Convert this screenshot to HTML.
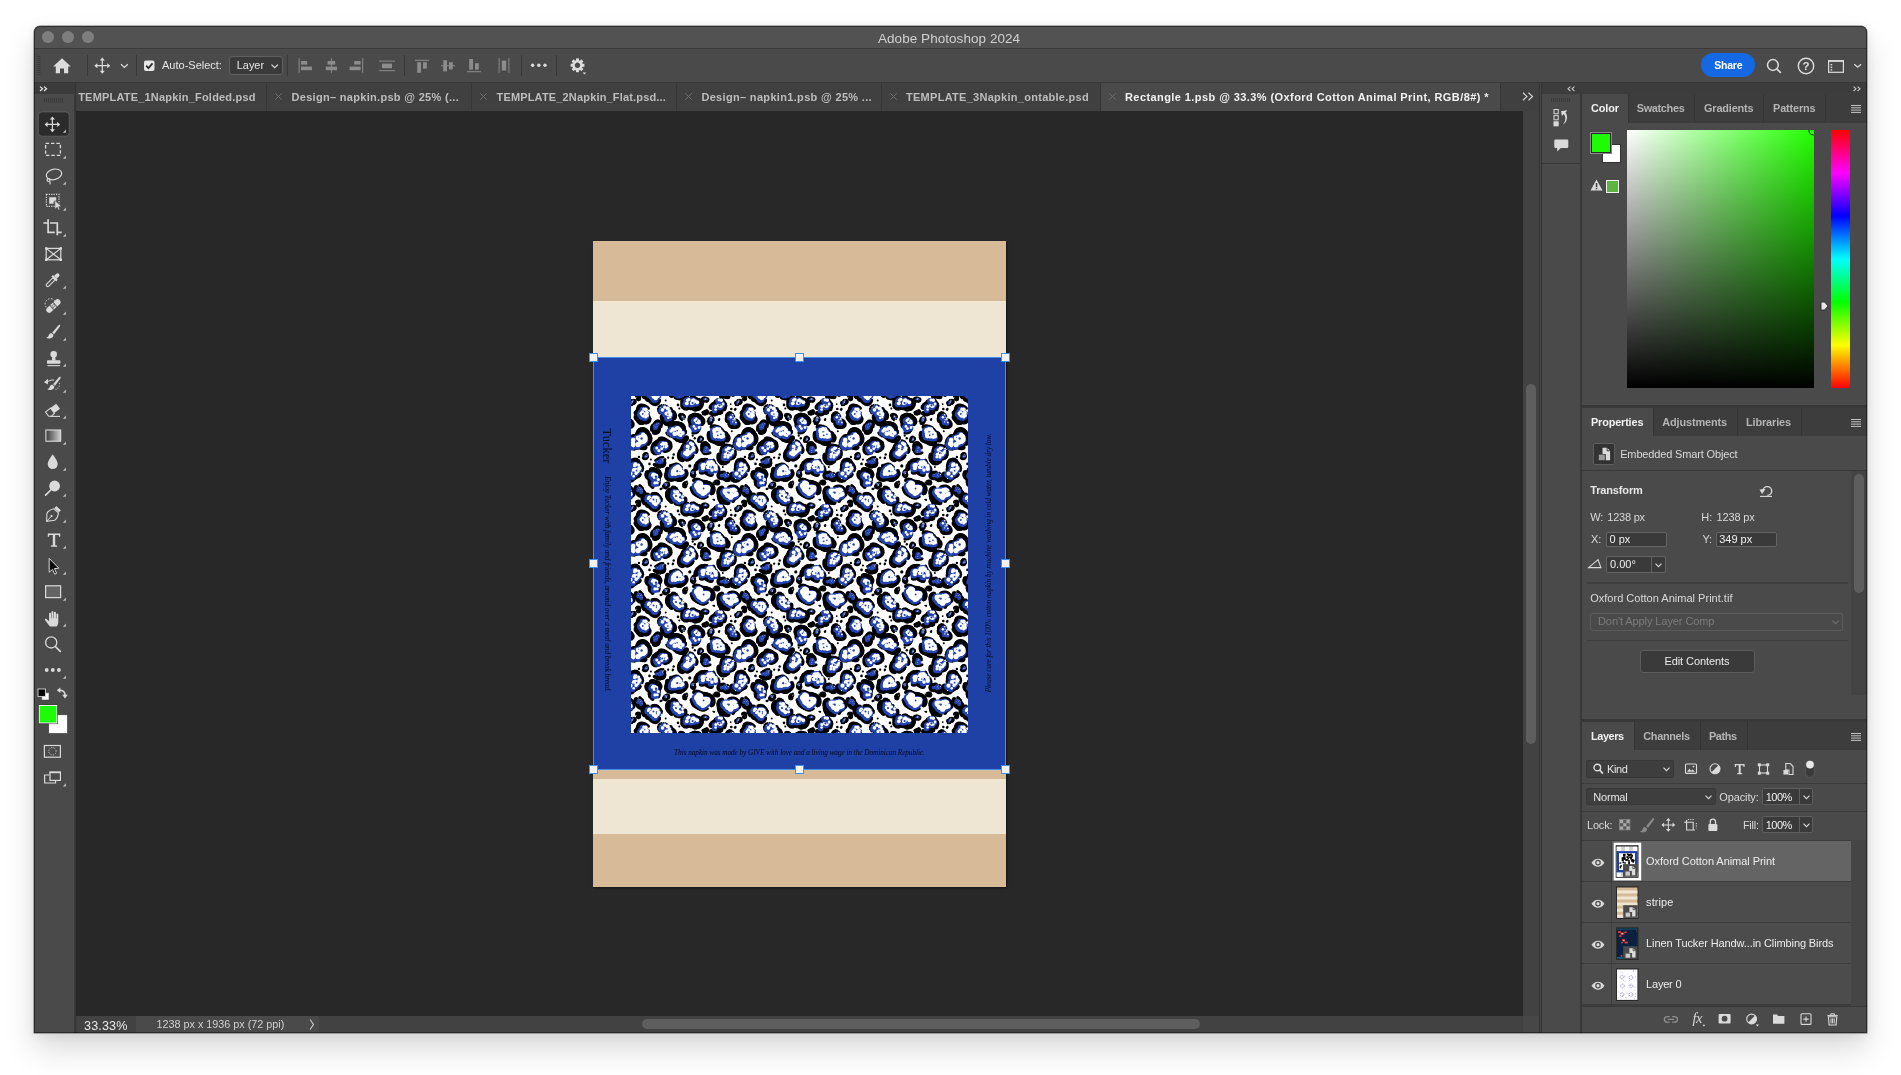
<!DOCTYPE html>
<html lang="en">
<head>
<meta charset="utf-8">
<title>Adobe Photoshop 2024</title>
<style>
*{box-sizing:border-box;margin:0;padding:0}
html,body{width:1901px;height:1075px;overflow:hidden;background:#fff}
body{position:relative;font-family:"Liberation Sans",sans-serif;font-size:11px;color:#d6d6d6;-webkit-font-smoothing:antialiased}
.a{position:absolute}
.t{position:absolute;white-space:pre;line-height:1}
.b{font-weight:bold}
svg{position:absolute;overflow:visible}
#win{left:34px;top:26px;width:1833px;height:1007px;background:#4a4a4a;border-radius:6px 6px 0 0;box-shadow:0 0 0 0.5px rgba(0,0,0,.55),0 16px 30px rgba(0,0,0,.15),0 2px 12px rgba(0,0,0,.07);overflow:hidden}
/* everything inside #page uses page coordinates */
#page{left:-34px;top:-26px;width:1901px;height:1075px;will-change:transform}
.sep{position:absolute;width:1px;background:#383838}
.tabsep{position:absolute;width:1px;top:83px;height:28px;background:#363636}
.x{position:absolute;top:92px;width:9px;height:9px}
.ptab{position:absolute;background:#3d3d3d}
.psep{position:absolute;width:1px;background:#343434}
.inp{position:absolute;background:#3a3a3a;border:1px solid #646464;border-radius:2px}
.row{position:absolute;left:1582px;width:269px;height:40px;background:#4c4c4c}
.eyecol{position:absolute;left:1611px;width:1px;background:#3e3e3e}
</style>
</head>
<body>
<div id="win" class="a"><div id="page" class="a">

<!-- TITLE BAR -->
<div class="a" style="left:34px;top:26px;width:1833px;height:22px;background:#525252"></div>
<div class="a" style="left:34px;top:48px;width:1833px;height:1px;background:#3a3a3a"></div>
<div class="a" style="left:42px;top:31px;width:12px;height:12px;border-radius:50%;background:#7e7e7e"></div>
<div class="a" style="left:62px;top:31px;width:12px;height:12px;border-radius:50%;background:#7e7e7e"></div>
<div class="a" style="left:82px;top:31px;width:12px;height:12px;border-radius:50%;background:#7e7e7e"></div>
<div class="t" style="left:878px;top:32px;font-size:13.5px;color:#d0d0d0;letter-spacing:.05px">Adobe Photoshop 2024</div>

<!-- OPTIONS BAR -->
<div id="opt" class="a" style="left:34px;top:49px;width:1833px;height:33px;background:#4a4a4a"></div>
<svg style="left:0;top:0" width="1901" height="1075">
<!-- grip -->
<g stroke="#3a3a3a" stroke-width="1"><path d="M37.5 56.5h3"/><path d="M37.5 58.5h3"/><path d="M37.5 60.5h3"/><path d="M37.5 62.5h3"/><path d="M37.5 64.5h3"/><path d="M37.5 66.5h3"/><path d="M37.5 68.5h3"/><path d="M37.5 70.5h3"/><path d="M37.5 72.5h3"/><path d="M37.5 74.5h3"/></g>
<!-- home -->
<path d="M62 58.2 L53.2 66.4 H55.8 V73.3 H60 V68.6 H64 V73.3 H68.2 V66.4 H70.8 Z" fill="#dcdcdc"/>
<g stroke="#383838" stroke-width="1"><path d="M87.5 55v21M136.5 55v21M287.5 55v21M404.5 55v21M521.5 55v21M556.5 55v21"/></g>
<!-- move tool icon -->
<g fill="#dcdcdc" stroke="none"><path d="M101.7 59.5h1.2v12.4h-1.2zM96.1 65.1h12.4v1.2H96.1z"/><path d="M102.3 57.6l2.5 3h-5zM102.3 73.8l-2.5-3h5zM94.3 65.7l3-2.5v5zM110.3 65.7l-3 2.5v-5z"/></g>
<path d="M121 64.2l3.4 3.3 3.4-3.3" fill="none" stroke="#dcdcdc" stroke-width="1.2"/>
<!-- checkbox -->
<rect x="144" y="60.5" width="10.5" height="10.5" rx="2" fill="#e6e6e6"/>
<path d="M146.2 65.6l2.3 2.5 4-4.7" fill="none" stroke="#2a2a2a" stroke-width="1.7"/>
<!-- Layer dropdown -->
<rect x="229.5" y="56.5" width="53" height="18" rx="2.5" fill="#3a3a3a" stroke="#606060"/>
<path d="M271.5 64.6l3.2 3.1 3.2-3.1" fill="none" stroke="#dcdcdc" stroke-width="1.2"/>
<!-- align icons (disabled gray) -->
<g fill="#8c8c8c">
<rect x="298.6" y="58.2" width="1" height="14.6"/><rect x="301" y="61" width="6.2" height="3.6"/><rect x="301" y="66.6" width="11" height="3.6"/>
<rect x="330.9" y="58.2" width="1" height="14.6"/><rect x="327.6" y="61" width="7.6" height="3.6"/><rect x="325.8" y="66.6" width="11.2" height="3.6"/>
<rect x="362.2" y="58.2" width="1" height="14.6"/><rect x="354.2" y="61" width="6.4" height="3.6"/><rect x="349.6" y="66.6" width="11" height="3.6"/>
<rect x="379" y="60.6" width="16" height="1"/><rect x="379" y="70.2" width="16" height="1"/><rect x="382" y="63.6" width="10" height="4.6"/>
<rect x="415" y="59.8" width="14" height="1"/><rect x="417.2" y="62.2" width="3.8" height="10.6"/><rect x="423" y="62.2" width="3.8" height="6.4"/>
<rect x="441" y="65.2" width="14" height="1"/><rect x="443.2" y="60.2" width="3.8" height="11.2"/><rect x="449" y="62.2" width="3.8" height="7.2"/>
<rect x="467" y="71.2" width="14" height="1"/><rect x="469.2" y="59" width="3.8" height="10.6"/><rect x="475" y="63.2" width="3.8" height="6.4"/>
<rect x="498.6" y="58.2" width="1" height="14.6"/><rect x="508.4" y="58.2" width="1" height="14.6"/><rect x="501.8" y="60.6" width="4.4" height="10"/>
</g>
<g fill="#dcdcdc"><circle cx="532.6" cy="65.2" r="1.7"/><circle cx="538.8" cy="65.2" r="1.7"/><circle cx="545" cy="65.2" r="1.7"/></g>
<!-- gear -->
<g transform="translate(577.5 65.3)"><g fill="#dcdcdc"><rect x="-1.5" y="-6.9" width="3" height="3.4" transform="rotate(0)"/><rect x="-1.5" y="-6.9" width="3" height="3.4" transform="rotate(45)"/><rect x="-1.5" y="-6.9" width="3" height="3.4" transform="rotate(90)"/><rect x="-1.5" y="-6.9" width="3" height="3.4" transform="rotate(135)"/><rect x="-1.5" y="-6.9" width="3" height="3.4" transform="rotate(180)"/><rect x="-1.5" y="-6.9" width="3" height="3.4" transform="rotate(225)"/><rect x="-1.5" y="-6.9" width="3" height="3.4" transform="rotate(270)"/><rect x="-1.5" y="-6.9" width="3" height="3.4" transform="rotate(315)"/></g><circle r="4" fill="none" stroke="#dcdcdc" stroke-width="2.6"/></g>
<path d="M582.6 72.4h3.6l-1.8 2z" fill="#dcdcdc"/>
<!-- share -->
<rect x="1701" y="53" width="54" height="24" rx="12" fill="#1568e3"/>
<!-- search -->
<circle cx="1772.9" cy="65" r="5.4" fill="none" stroke="#dcdcdc" stroke-width="1.5"/><path d="M1776.8 68.9l4 4" stroke="#dcdcdc" stroke-width="1.7" fill="none"/>
<!-- help -->
<circle cx="1806" cy="66" r="7.7" fill="none" stroke="#dcdcdc" stroke-width="1.4"/>
<!-- workspace -->
<rect x="1828.6" y="60.9" width="14.8" height="11.4" fill="none" stroke="#dcdcdc" stroke-width="1.2"/><rect x="1828" y="60.2" width="16" height="1.6" fill="#dcdcdc"/>
<g fill="#dcdcdc"><rect x="1830.6" y="64" width="1.6" height="1.4"/><rect x="1830.6" y="66.6" width="1.6" height="1.4"/><rect x="1830.6" y="69.2" width="1.6" height="1.4"/></g>
<path d="M1854.3 64.2l3.4 3.1 3.4-3.1" fill="none" stroke="#dcdcdc" stroke-width="1.2"/>
</svg>
<div class="t" style="left:162px;top:60px;font-size:11px;color:#e4e4e4">Auto-Select:</div>
<div class="t" style="left:236.8px;top:60px;font-size:10.9px;color:#e4e4e4">Layer</div>
<div class="t b" style="left:1714.200px;top:59.800px;font-size:10.500px;color:#fff;letter-spacing:-.2px">Share</div>
<div class="t b" style="left:1802.6px;top:60.6px;font-size:11.5px;color:#dcdcdc">?</div>


<!-- TAB BAR -->
<div class="a" style="left:34px;top:82px;width:1833px;height:1px;background:#383838"></div>
<div class="a" style="left:75px;top:83px;width:1465px;height:28px;background:#404040"></div>
<div class="a" style="left:1101px;top:83px;width:399px;height:28px;background:#4a4a4a"></div>
<div class="t b" style="left:78.2px;top:91.5px;font-size:11px;letter-spacing:0.198px;color:#bdbdbd">TEMPLATE_1Napkin_Folded.psd</div>
<div class="t b" style="left:291.5px;top:91.5px;font-size:11px;letter-spacing:0.305px;color:#bdbdbd">Design– napkin.psb @ 25% (...</div>
<svg style="left:274.5px;top:93px" width="7" height="7" viewBox="0 0 7 7"><path d="M.3 .3L6.7 6.7M6.7 .3L.3 6.7" stroke="#6c6c6c" stroke-width="1" fill="none"/></svg>
<div class="t b" style="left:496.5px;top:91.5px;font-size:11px;letter-spacing:0.167px;color:#bdbdbd">TEMPLATE_2Napkin_Flat.psd...</div>
<svg style="left:479.5px;top:93px" width="7" height="7" viewBox="0 0 7 7"><path d="M.3 .3L6.7 6.7M6.7 .3L.3 6.7" stroke="#6c6c6c" stroke-width="1" fill="none"/></svg>
<div class="t b" style="left:701.4px;top:91.5px;font-size:11px;letter-spacing:0.327px;color:#bdbdbd">Design– napkin1.psb @ 25% ...</div>
<svg style="left:684.5px;top:93px" width="7" height="7" viewBox="0 0 7 7"><path d="M.3 .3L6.7 6.7M6.7 .3L.3 6.7" stroke="#6c6c6c" stroke-width="1" fill="none"/></svg>
<div class="t b" style="left:906px;top:91.5px;font-size:11px;letter-spacing:0.278px;color:#bdbdbd">TEMPLATE_3Napkin_ontable.psd</div>
<svg style="left:889.5px;top:93px" width="7" height="7" viewBox="0 0 7 7"><path d="M.3 .3L6.7 6.7M6.7 .3L.3 6.7" stroke="#6c6c6c" stroke-width="1" fill="none"/></svg>
<div class="t b" style="left:1125px;top:91.5px;font-size:11px;letter-spacing:0.420px;color:#f2f2f2">Rectangle 1.psb @ 33.3% (Oxford Cotton Animal Print, RGB/8#) *</div>
<svg style="left:1108.5px;top:93px" width="7" height="7" viewBox="0 0 7 7"><path d="M.3 .3L6.7 6.7M6.7 .3L.3 6.7" stroke="#6c6c6c" stroke-width="1" fill="none"/></svg>
<div class="tabsep" style="left:265.5px"></div><div class="tabsep" style="left:471.2px"></div><div class="tabsep" style="left:676.2px"></div><div class="tabsep" style="left:881.1px"></div><div class="tabsep" style="left:1100.0px"></div><div class="tabsep" style="left:1500px"></div><svg style="left:1522px;top:91.5px" width="12" height="9" viewBox="0 0 12 9"><path d="M1 .8l4 3.7-4 3.7M6.5 .8l4 3.7-4 3.7" fill="none" stroke="#d0d0d0" stroke-width="1.2"/></svg>

<!-- TOOLS PANEL -->
<div class="a" style="left:34px;top:83px;width:40px;height:950px;background:#4a4a4a"></div>
<div class="a" style="left:34px;top:83px;width:40px;height:11px;background:#3b3b3b"></div>
<div class="a" style="left:74px;top:83px;width:1px;height:950px;background:#3a3a3a"></div>
<div class="a" style="left:75px;top:83px;width:1px;height:950px;background:#333"></div>
<svg style="left:0;top:0" width="1901" height="1075"><path d="M40 86.6l2.6 2.2-2.6 2.2M44 86.6l2.6 2.2-2.6 2.2" fill="none" stroke="#e8e8e8" stroke-width="1.2"/><g stroke="#393939" stroke-width="1"><path d="M44.5 98v4.5"/><path d="M46.5 98v4.5"/><path d="M48.5 98v4.5"/><path d="M50.5 98v4.5"/><path d="M52.5 98v4.5"/><path d="M54.5 98v4.5"/><path d="M56.5 98v4.5"/><path d="M58.5 98v4.5"/><path d="M60.5 98v4.5"/><path d="M62.5 98v4.5"/></g><rect x="38.300" y="111.900" width="30.900" height="24.300" rx="3.500" fill="#2b2b2b" stroke="#5c5c5c" stroke-width="1"/><path d="M66 129.6v3.2h-3.2z" fill="#b8b8b8"/><path d="M66 155.6v3.2h-3.2z" fill="#b8b8b8"/><path d="M66 181.6v3.2h-3.2z" fill="#b8b8b8"/><path d="M66 207.6v3.2h-3.2z" fill="#b8b8b8"/><path d="M66 233.6v3.2h-3.2z" fill="#b8b8b8"/><path d="M66 285.6v3.2h-3.2z" fill="#b8b8b8"/><path d="M66 311.6v3.2h-3.2z" fill="#b8b8b8"/><path d="M66 337.6v3.2h-3.2z" fill="#b8b8b8"/><path d="M66 363.6v3.2h-3.2z" fill="#b8b8b8"/><path d="M66 389.6v3.2h-3.2z" fill="#b8b8b8"/><path d="M66 415.6v3.2h-3.2z" fill="#b8b8b8"/><path d="M66 441.6v3.2h-3.2z" fill="#b8b8b8"/><path d="M66 467.6v3.2h-3.2z" fill="#b8b8b8"/><path d="M66 493.6v3.2h-3.2z" fill="#b8b8b8"/><path d="M66 519.6v3.2h-3.2z" fill="#b8b8b8"/><path d="M66 545.6v3.2h-3.2z" fill="#b8b8b8"/><path d="M66 571.6v3.2h-3.2z" fill="#b8b8b8"/><path d="M66 597.6v3.2h-3.2z" fill="#b8b8b8"/><path d="M66 623.6v3.2h-3.2z" fill="#b8b8b8"/><path d="M66 675.6v3.2h-3.2z" fill="#b8b8b8"/><g fill="#dadada"><path d="M51.8 118.4h1.2v12h-1.2zM46.4 123.8h12v1.2h-12z"/><path d="M52.4 116.6l2.6 3h-5.2zM52.4 132.2l-2.6-3h5.2zM44.6 124.4l3-2.6v5.2zM60.2 124.4l-3 2.6v-5.2z"/></g><rect x="45.6" y="143.4" width="14.8" height="12" fill="none" stroke="#dadada" stroke-width="1.3" stroke-dasharray="3.4 2"/><g fill="none" stroke="#dadada" stroke-width="1.2"><ellipse cx="54" cy="174.4" rx="7.8" ry="5.2" transform="rotate(-14 54 174.4)"/><circle cx="48.6" cy="180" r="1.5"/><path d="M49.4 181.2c1 .8 .9 2 .6 3.2"/></g><rect x="46.4" y="194.4" width="12.6" height="12" fill="none" stroke="#dadada" stroke-width="1.2" stroke-dasharray="1.2 1.2"/><path d="M49.2 197.2h7v4.4h-2.6v2.2h-4.4z" fill="#dadada"/><path d="M54.8 200.4l6.6 6-2.8 .2 1.2 2.8-1.4 .6-1.2-2.8-2.2 1.8z" fill="#dadada" stroke="#4a4a4a" stroke-width=".5"/><g fill="none" stroke="#dadada" stroke-width="1.7"><path d="M43.4 223h4.7M48.1 219.2v13.1h6.6M50 223h7.3v12.2M57.3 232.3h4.4"/></g><g fill="none" stroke="#dadada" stroke-width="1.2"><rect x="46.2" y="248.4" width="14.6" height="11.4"/><path d="M46.2 248.4l14.6 11.4M60.8 248.4l-14.6 11.4"/></g><g fill="#dadada"><rect x="45" y="247.2" width="2.4" height="2.4"/><rect x="59.6" y="247.2" width="2.4" height="2.4"/><rect x="45" y="258.6" width="2.4" height="2.4"/><rect x="59.6" y="258.6" width="2.4" height="2.4"/></g><g transform="translate(52.8 280) rotate(45)"><rect x="-1.5" y="-1.8" width="3" height="10.4" rx="1.4" fill="none" stroke="#dadada" stroke-width="1.1"/><rect x="-3.4" y="-3.6" width="6.8" height="2.2" fill="#dadada"/><path d="M-1.9-3.6v-3.2a1.9 1.9 0 0 1 3.8 0v3.2z" fill="#dadada"/></g><g transform="translate(53.4 306) rotate(-42)"><rect x="-8.6" y="-2.9" width="17.2" height="5.8" rx="2.9" fill="#dadada"/><g fill="#4a4a4a"><rect x="-2.6" y="-2.9" width=".9" height="5.8"/><rect x="1.7" y="-2.9" width=".9" height="5.8"/><circle cx="-.7" cy="-1" r=".55"/><circle cx=".7" cy="-1" r=".55"/><circle cx="-.7" cy="1" r=".55"/><circle cx=".7" cy="1" r=".55"/></g></g><path d="M46.2 307.2a5.2 5.2 0 1 1 8.6-6.4" fill="none" stroke="#dadada" stroke-width="1" stroke-dasharray="1.6 1.4"/><path d="M59.9 324.8c.6 .4 .3 1.2-.2 1.9l-5.6 7.6-1.9-1.5 6-7.3c.5-.6 1.200-1.100 1.700-.700z" fill="#dadada"/><path d="M51.500 333.300l1.900 1.500c.3 2.200-1.800 3.700-4.300 3.700-1.300 0-2.200-.3-3-.9 1.800-.2 2.300-1.300 2.800-2.600.5-1.200 1.300-1.800 2.600-1.700z" fill="#dadada"/><g fill="#dadada"><circle cx="53.7" cy="354.2" r="3.3"/><path d="M52.300 356.500h2.800l.5 3.900h-3.800z"/><rect x="47" y="360.200" width="13.400" height="3.600" rx=".8"/><rect x="47.400" y="365.100" width="12.600" height="1.100"/></g><path d="M60.400 376.800c.6 .4 .3 1.200-.2 1.900l-5.200 7.100-1.900-1.500 5.600-6.800c.5-.6 1.200-1.100 1.700-.7z" fill="#dadada"/><path d="M52.400 384.800l1.900 1.500c.3 2.200-1.700 3.700-4.200 3.700-1.300 0-2.200-.3-3-.9 1.800-.2 2.300-1.300 2.800-2.600.4-1.200 1.200-1.800 2.500-1.700z" fill="#dadada"/><path d="M44 382.300l3.900-3.600v2.200c2.200-1.100 4.200-1.500 6.200-1.300v1c-2-.1-4 .3-6.200 1.500v2.300z" fill="#dadada"/><g fill="#dadada"><circle cx="59.600" cy="383.600" r=".6"/><circle cx="59.200" cy="386" r=".6"/><circle cx="57.800" cy="388" r=".6"/><circle cx="56" cy="389.300" r=".6"/></g><path d="M56.200 403.800l3.800 5-5.600 4.300-3.900-5z" fill="#dadada"/><path d="M50.500 408.100l-5 3.900 3.200 4.300h2.800l2.900-3.200z" fill="none" stroke="#dadada" stroke-width="1.100"/><path d="M50.500 416.400h9.500" stroke="#dadada" stroke-width="1.100"/><defs><linearGradient id="gt" x1="0" x2="1" y1="0" y2="0"><stop offset="0" stop-color="#3a3a3a"/><stop offset="1" stop-color="#d0d0d0"/></linearGradient></defs><rect x="45.900" y="430" width="14.800" height="11.200" fill="url(#gt)" stroke="#dadada" stroke-width="1.100"/><path d="M52.700 454.300c2.200 3.600 5 6.600 5 9.800a5 5 0 0 1-10 0c0-3.200 2.800-6.200 5-9.800z" fill="#dadada"/><circle cx="54.600" cy="486" r="5.400" fill="#dadada"/><path d="M50.800 490l-5.200 5.200" stroke="#dadada" stroke-width="1.700" stroke-linecap="round"/><g transform="translate(52.400 515) rotate(42)"><path d="M-3.100-9.200h6.200v2.800h-6.200z" fill="#dadada"/><path d="M-3-5.600c-1.800 2.400-2.800 5-2.200 8l5.200 6.200 5.200-6.200c.6-3-.4-5.600-2.200-8z" fill="none" stroke="#dadada" stroke-width="1.100"/><path d="M0 8.200v-6" stroke="#dadada" stroke-width=".9"/><circle cx="0" cy="1.400" r="1.100" fill="#dadada"/></g><path d="M47.800 533.400h12.400v3.400h-1.100l-.5-1.900h-3.400v10.300l1.900 .4v1.100h-6.200v-1.100l1.900-.4v-10.300h-3.400l-.5 1.900h-1.100z" fill="#dadada"/><path d="M49.200 558.400v13.800l3.300-2.800 2.200 4.800 1.900-.9-2.200-4.700 4.400-.4z" fill="#0a0a0a" stroke="#dadada" stroke-width="1"/><rect x="45.600" y="585.800" width="15" height="11.800" fill="#646464" stroke="#dadada" stroke-width="1.200"/><g transform="translate(53 618) scale(1.180 1.040) translate(-52 -618)"><path d="M49.400 626.200c-1.300-1.600-2.600-3.800-4.200-6.200-.5-.8 .6-1.800 1.500-.9l2 2v-7.400c0-1.100 1.600-1.100 1.600 0v4.600h.4v-6c0-1.100 1.700-1.100 1.700 0v6h.4v-5.500c0-1.100 1.700-1.100 1.700 0v5.800h.4v-4.200c0-1.100 1.600-1.100 1.600 0v7.300c0 2-.6 3.300-1.400 4.500z" fill="#dadada"/></g><circle cx="51.200" cy="642.400" r="5.600" fill="none" stroke="#dadada" stroke-width="1.300"/><path d="M55.300 646.500l5 4.900" stroke="#dadada" stroke-width="1.700" stroke-linecap="round"/><g fill="#dadada"><circle cx="46.700" cy="670" r="1.900"/><circle cx="52.800" cy="670" r="1.900"/><circle cx="58.900" cy="670" r="1.900"/></g><rect x="42.200" y="693.200" width="6.200" height="6.200" fill="#fff" stroke="#dadada" stroke-width=".8"/><rect x="38" y="689" width="7.400" height="7.400" fill="#000" stroke="#dadada" stroke-width=".9"/><path d="M59.600 690.300c3.400 0 5.400 1.700 5.400 5" fill="none" stroke="#dadada" stroke-width="1.600"/><path d="M60.400 687.600v5.400l-3.600-2.700zM62.200 694.800h5.600l-2.800 3.800z" fill="#dadada"/><rect x="48.700" y="714.800" width="18.700" height="18.600" fill="#fff" stroke="#3a3a3a" stroke-width=".6"/><rect x="39.200" y="705.500" width="17.700" height="17.500" fill="#1efc05" stroke="#fff" stroke-width="1"/><rect x="38.400" y="704.700" width="19.300" height="19.100" fill="none" stroke="#3a3a3a" stroke-width=".6"/><rect x="44.400" y="745.500" width="16" height="11.700" fill="none" stroke="#dadada" stroke-width="1.200"/><circle cx="52.400" cy="751.300" r="3.700" fill="none" stroke="#dadada" stroke-width="1" stroke-dasharray=".9 1.030"/><g fill="none" stroke="#dadada" stroke-width="1.200"><path d="M49.400 775h-4.800v8h11v-2.400"/><rect x="50" y="772.400" width="10.400" height="8"/></g><rect x="49.400" y="771.400" width="11.600" height="1.800" fill="#dadada"/><path d="M66 783.200v3.200h-3.200z" fill="#b8b8b8"/></svg>

<!-- CANVAS -->
<div class="a" style="left:76px;top:111px;width:1447px;height:905px;background:#282828"></div>
<div class="a" style="left:593px;top:241px;width:413px;height:646px;background:#d7bb98;box-shadow:1px 1px 2px rgba(0,0,0,.5)"></div>
<div class="a" style="left:593px;top:300.5px;width:413px;height:58px;background:#efe5d3"></div>
<div class="a" style="left:593px;top:778.5px;width:413px;height:55.5px;background:#efe5d3"></div>
<div class="a" style="left:593px;top:357px;width:413px;height:413px;background:#1f40a5"></div>
<svg style="left:631px;top:396px" width="337" height="337" viewBox="0 0 337 337"><defs><pattern id="lp" x="-39" y="-15" width="106" height="106" patternUnits="userSpaceOnUse"><rect width="106" height="106" fill="#fff"/><g fill="#000"><circle cx="57.6" cy="59.3" r="2.6"/><circle cx="57.0" cy="60.5" r="2.8"/><circle cx="56.6" cy="61.7" r="2.4"/><circle cx="55.9" cy="62.7" r="2.3"/><circle cx="53.0" cy="66.2" r="2.5"/><circle cx="51.8" cy="66.4" r="2.9"/><circle cx="50.9" cy="67.1" r="2.0"/><circle cx="49.7" cy="66.7" r="2.4"/><circle cx="48.7" cy="66.5" r="2.1"/><circle cx="47.7" cy="66.3" r="2.1"/><circle cx="46.7" cy="66.8" r="1.6"/><circle cx="45.6" cy="67.0" r="1.8"/><circle cx="44.0" cy="67.8" r="1.4"/><circle cx="42.2" cy="68.3" r="1.5"/><circle cx="40.1" cy="68.6" r="1.1"/><circle cx="38.3" cy="68.0" r="1.2"/><circle cx="36.8" cy="67.0" r="1.1"/><circle cx="35.8" cy="65.5" r="1.1"/><circle cx="35.6" cy="63.6" r="1.2"/><circle cx="35.7" cy="61.8" r="1.2"/><circle cx="36.1" cy="60.1" r="1.2"/><circle cx="36.7" cy="58.6" r="1.2"/><circle cx="37.9" cy="57.3" r="1.6"/><circle cx="39.0" cy="56.2" r="1.7"/><circle cx="40.8" cy="55.7" r="2.4"/><circle cx="41.8" cy="55.1" r="2.0"/><circle cx="43.3" cy="55.1" r="2.3"/><circle cx="46.1" cy="53.2" r="2.8"/><circle cx="46.8" cy="52.3" r="3.4"/><circle cx="47.7" cy="50.9" r="3.3"/><circle cx="48.9" cy="50.0" r="3.6"/><circle cx="50.4" cy="49.2" r="3.2"/><circle cx="51.8" cy="49.2" r="3.0"/><circle cx="53.2" cy="49.8" r="2.8"/><circle cx="54.1" cy="51.0" r="3.1"/><circle cx="54.8" cy="52.3" r="3.3"/><circle cx="55.8" cy="53.2" r="2.8"/><circle cx="56.4" cy="54.4" r="2.9"/><circle cx="56.8" cy="55.6" r="3.1"/><circle cx="57.5" cy="56.7" r="2.8"/><circle cx="57.4" cy="58.1" r="3.1"/><circle cx="29.3" cy="54.3" r="2.1"/><circle cx="29.6" cy="55.7" r="2.7"/><circle cx="29.4" cy="57.2" r="3.2"/><circle cx="29.0" cy="58.7" r="2.9"/><circle cx="24.0" cy="61.5" r="3.2"/><circle cx="22.6" cy="61.3" r="3.7"/><circle cx="21.5" cy="61.5" r="3.4"/><circle cx="20.3" cy="61.3" r="3.4"/><circle cx="19.3" cy="60.9" r="3.3"/><circle cx="18.4" cy="60.8" r="2.8"/><circle cx="17.5" cy="60.3" r="2.8"/><circle cx="16.7" cy="59.9" r="2.8"/><circle cx="15.7" cy="59.7" r="2.8"/><circle cx="14.5" cy="59.6" r="2.6"/><circle cx="13.4" cy="59.0" r="2.8"/><circle cx="12.1" cy="58.4" r="2.4"/><circle cx="11.3" cy="57.4" r="2.2"/><circle cx="10.9" cy="56.2" r="2.0"/><circle cx="11.4" cy="54.9" r="2.8"/><circle cx="11.2" cy="53.6" r="2.4"/><circle cx="11.6" cy="52.5" r="2.8"/><circle cx="13.6" cy="45.9" r="2.1"/><circle cx="14.9" cy="45.1" r="1.8"/><circle cx="16.4" cy="45.0" r="1.8"/><circle cx="17.8" cy="44.7" r="1.2"/><circle cx="19.2" cy="45.0" r="1.2"/><circle cx="20.6" cy="45.3" r="1.0"/><circle cx="21.7" cy="46.0" r="1.2"/><circle cx="22.8" cy="46.6" r="1.0"/><circle cx="23.7" cy="47.5" r="1.0"/><circle cx="24.2" cy="48.7" r="1.4"/><circle cx="24.6" cy="49.7" r="1.6"/><circle cx="25.3" cy="50.5" r="1.6"/><circle cx="25.9" cy="51.3" r="1.9"/><circle cx="26.8" cy="52.1" r="2.3"/><circle cx="28.0" cy="53.0" r="2.4"/><circle cx="93.2" cy="11.4" r="2.0"/><circle cx="93.3" cy="13.0" r="2.3"/><circle cx="93.3" cy="14.7" r="2.0"/><circle cx="92.5" cy="16.1" r="2.2"/><circle cx="91.5" cy="17.4" r="1.8"/><circle cx="89.8" cy="17.9" r="1.8"/><circle cx="88.0" cy="17.7" r="1.9"/><circle cx="86.4" cy="17.3" r="1.9"/><circle cx="85.1" cy="16.7" r="2.1"/><circle cx="84.1" cy="16.3" r="2.4"/><circle cx="79.7" cy="14.3" r="2.6"/><circle cx="79.6" cy="13.2" r="3.0"/><circle cx="79.3" cy="12.4" r="3.2"/><circle cx="79.0" cy="11.6" r="3.5"/><circle cx="78.2" cy="10.9" r="3.6"/><circle cx="77.7" cy="10.0" r="4.0"/><circle cx="76.7" cy="8.8" r="3.6"/><circle cx="76.9" cy="7.6" r="4.0"/><circle cx="76.7" cy="6.2" r="3.5"/><circle cx="77.2" cy="5.0" r="3.4"/><circle cx="78.0" cy="3.9" r="3.5"/><circle cx="81.0" cy="0.6" r="2.2"/><circle cx="81.0" cy="106.6" r="2.2"/><circle cx="82.5" cy="0.5" r="1.7"/><circle cx="82.5" cy="106.5" r="1.7"/><circle cx="84.1" cy="1.4" r="1.7"/><circle cx="84.1" cy="107.4" r="1.7"/><circle cx="85.2" cy="2.7" r="1.5"/><circle cx="86.0" cy="4.1" r="1.3"/><circle cx="86.5" cy="5.2" r="1.2"/><circle cx="87.0" cy="6.0" r="1.4"/><circle cx="87.8" cy="6.2" r="1.4"/><circle cx="88.9" cy="6.5" r="1.6"/><circle cx="20.3" cy="85.8" r="1.3"/><circle cx="20.9" cy="87.4" r="1.4"/><circle cx="20.9" cy="89.1" r="1.7"/><circle cx="20.6" cy="90.8" r="1.5"/><circle cx="13.0" cy="93.2" r="2.8"/><circle cx="11.7" cy="92.9" r="2.7"/><circle cx="10.5" cy="92.1" r="3.0"/><circle cx="9.6" cy="91.1" r="3.3"/><circle cx="8.9" cy="90.9" r="2.6"/><circle cx="8.5" cy="89.8" r="3.4"/><circle cx="7.7" cy="89.9" r="2.9"/><circle cx="6.6" cy="90.5" r="2.4"/><circle cx="5.4" cy="90.7" r="2.8"/><circle cx="3.5" cy="91.1" r="2.7"/><circle cx="-2.1" cy="87.5" r="2.5"/><circle cx="103.9" cy="87.5" r="2.5"/><circle cx="-1.5" cy="85.8" r="3.0"/><circle cx="104.5" cy="85.8" r="3.0"/><circle cx="-1.2" cy="84.3" r="2.5"/><circle cx="104.8" cy="84.3" r="2.5"/><circle cx="0.3" cy="83.1" r="3.3"/><circle cx="106.3" cy="83.1" r="3.3"/><circle cx="1.1" cy="81.9" r="2.8"/><circle cx="107.1" cy="81.9" r="2.8"/><circle cx="2.3" cy="81.1" r="3.0"/><circle cx="108.3" cy="81.1" r="3.0"/><circle cx="3.7" cy="80.7" r="3.4"/><circle cx="4.7" cy="80.1" r="3.1"/><circle cx="5.7" cy="79.8" r="2.8"/><circle cx="6.9" cy="79.9" r="3.1"/><circle cx="7.7" cy="79.3" r="2.3"/><circle cx="8.6" cy="79.0" r="2.1"/><circle cx="15.5" cy="79.1" r="1.5"/><circle cx="16.3" cy="80.1" r="1.3"/><circle cx="16.8" cy="81.2" r="1.2"/><circle cx="17.7" cy="82.1" r="0.9"/><circle cx="18.6" cy="83.2" r="0.9"/><circle cx="19.5" cy="84.4" r="0.9"/><circle cx="78.3" cy="65.2" r="2.3"/><circle cx="77.6" cy="66.6" r="2.7"/><circle cx="77.2" cy="68.0" r="2.0"/><circle cx="76.1" cy="68.9" r="2.1"/><circle cx="75.0" cy="69.6" r="2.0"/><circle cx="73.7" cy="70.0" r="2.1"/><circle cx="72.5" cy="70.2" r="1.8"/><circle cx="67.6" cy="72.2" r="1.2"/><circle cx="65.9" cy="73.1" r="1.1"/><circle cx="64.0" cy="73.3" r="1.3"/><circle cx="62.2" cy="73.0" r="1.2"/><circle cx="61.1" cy="71.6" r="1.8"/><circle cx="60.5" cy="70.0" r="2.0"/><circle cx="60.2" cy="68.4" r="1.9"/><circle cx="60.9" cy="66.6" r="2.5"/><circle cx="61.7" cy="65.2" r="2.8"/><circle cx="62.8" cy="64.2" r="3.3"/><circle cx="63.8" cy="63.4" r="3.5"/><circle cx="64.3" cy="62.6" r="2.8"/><circle cx="65.7" cy="62.4" r="3.7"/><circle cx="66.1" cy="61.7" r="3.1"/><circle cx="66.8" cy="61.4" r="3.5"/><circle cx="68.8" cy="58.8" r="3.2"/><circle cx="69.9" cy="58.4" r="3.0"/><circle cx="71.1" cy="58.2" r="2.4"/><circle cx="72.2" cy="58.7" r="2.4"/><circle cx="73.0" cy="59.7" r="2.9"/><circle cx="74.3" cy="59.8" r="2.2"/><circle cx="75.5" cy="60.4" r="2.1"/><circle cx="76.3" cy="61.5" r="2.8"/><circle cx="77.4" cy="62.5" r="2.7"/><circle cx="78.4" cy="63.7" r="2.1"/><circle cx="27.1" cy="25.6" r="2.1"/><circle cx="26.6" cy="26.7" r="2.2"/><circle cx="25.8" cy="27.7" r="2.6"/><circle cx="22.1" cy="30.6" r="3.3"/><circle cx="21.2" cy="30.4" r="3.1"/><circle cx="20.4" cy="30.2" r="3.3"/><circle cx="19.5" cy="31.2" r="2.6"/><circle cx="18.3" cy="31.9" r="2.8"/><circle cx="16.7" cy="32.6" r="2.9"/><circle cx="14.9" cy="32.8" r="2.7"/><circle cx="13.2" cy="32.3" r="2.3"/><circle cx="13.3" cy="26.2" r="2.7"/><circle cx="13.6" cy="25.1" r="2.3"/><circle cx="14.7" cy="24.2" r="2.7"/><circle cx="15.3" cy="23.4" r="2.1"/><circle cx="16.4" cy="23.1" r="2.5"/><circle cx="17.0" cy="22.6" r="2.1"/><circle cx="17.5" cy="22.0" r="2.3"/><circle cx="17.7" cy="20.7" r="2.1"/><circle cx="22.3" cy="16.0" r="1.2"/><circle cx="23.7" cy="16.9" r="1.2"/><circle cx="24.7" cy="18.3" r="1.3"/><circle cx="25.5" cy="19.6" r="1.2"/><circle cx="26.4" cy="20.6" r="1.1"/><circle cx="27.0" cy="21.9" r="1.5"/><circle cx="27.4" cy="23.1" r="1.7"/><circle cx="27.2" cy="24.4" r="2.2"/><circle cx="82.5" cy="33.4" r="2.3"/><circle cx="82.5" cy="34.6" r="2.5"/><circle cx="82.0" cy="35.7" r="3.0"/><circle cx="81.7" cy="36.9" r="2.5"/><circle cx="79.9" cy="40.5" r="2.4"/><circle cx="79.0" cy="41.7" r="2.5"/><circle cx="77.7" cy="42.7" r="2.4"/><circle cx="76.1" cy="42.5" r="2.9"/><circle cx="74.7" cy="41.7" r="3.2"/><circle cx="73.5" cy="40.7" r="3.0"/><circle cx="72.8" cy="39.3" r="3.4"/><circle cx="72.0" cy="38.7" r="2.7"/><circle cx="71.7" cy="37.5" r="3.3"/><circle cx="71.4" cy="36.7" r="3.4"/><circle cx="70.9" cy="36.0" r="3.2"/><circle cx="67.8" cy="31.6" r="1.8"/><circle cx="66.8" cy="29.9" r="1.7"/><circle cx="66.4" cy="28.0" r="1.6"/><circle cx="66.7" cy="26.0" r="1.2"/><circle cx="68.0" cy="24.8" r="1.3"/><circle cx="69.6" cy="24.0" r="0.9"/><circle cx="71.5" cy="24.0" r="0.9"/><circle cx="73.2" cy="24.3" r="1.0"/><circle cx="74.7" cy="24.7" r="1.0"/><circle cx="78.6" cy="28.2" r="2.1"/><circle cx="79.1" cy="29.2" r="1.9"/><circle cx="79.3" cy="30.2" r="2.4"/><circle cx="80.0" cy="30.8" r="2.3"/><circle cx="80.7" cy="31.5" r="2.4"/><circle cx="81.3" cy="32.4" r="2.9"/><circle cx="41.8" cy="7.4" r="1.8"/><circle cx="41.3" cy="8.9" r="1.2"/><circle cx="39.9" cy="10.1" r="1.5"/><circle cx="38.5" cy="10.9" r="1.6"/><circle cx="37.3" cy="11.6" r="1.5"/><circle cx="36.4" cy="12.2" r="1.7"/><circle cx="35.8" cy="13.2" r="1.5"/><circle cx="35.0" cy="14.0" r="2.0"/><circle cx="29.8" cy="15.5" r="2.7"/><circle cx="28.8" cy="14.8" r="3.1"/><circle cx="27.9" cy="14.2" r="3.6"/><circle cx="26.8" cy="14.1" r="3.3"/><circle cx="25.7" cy="13.7" r="3.5"/><circle cx="24.9" cy="13.0" r="4.0"/><circle cx="23.8" cy="12.4" r="3.7"/><circle cx="23.1" cy="11.5" r="3.7"/><circle cx="22.5" cy="10.4" r="3.3"/><circle cx="22.3" cy="9.2" r="3.5"/><circle cx="22.1" cy="8.0" r="3.3"/><circle cx="21.9" cy="6.8" r="3.3"/><circle cx="21.5" cy="5.5" r="3.1"/><circle cx="21.3" cy="4.1" r="2.8"/><circle cx="21.8" cy="2.7" r="2.8"/><circle cx="21.8" cy="108.7" r="2.8"/><circle cx="22.2" cy="1.3" r="2.1"/><circle cx="22.2" cy="107.3" r="2.1"/><circle cx="23.8" cy="0.9" r="2.4"/><circle cx="23.8" cy="106.9" r="2.4"/><circle cx="30.9" cy="0.3" r="1.8"/><circle cx="30.9" cy="106.3" r="1.8"/><circle cx="32.0" cy="-0.4" r="1.7"/><circle cx="32.0" cy="105.6" r="1.7"/><circle cx="33.3" cy="-0.7" r="1.9"/><circle cx="33.3" cy="105.3" r="1.9"/><circle cx="34.7" cy="-0.9" r="1.6"/><circle cx="34.7" cy="105.1" r="1.6"/><circle cx="35.9" cy="-0.3" r="2.1"/><circle cx="35.9" cy="105.7" r="2.1"/><circle cx="37.1" cy="0.3" r="2.2"/><circle cx="37.1" cy="106.3" r="2.2"/><circle cx="38.3" cy="1.0" r="2.2"/><circle cx="38.3" cy="107.0" r="2.2"/><circle cx="39.7" cy="1.8" r="1.8"/><circle cx="39.7" cy="107.8" r="1.8"/><circle cx="40.8" cy="2.9" r="1.8"/><circle cx="41.7" cy="4.3" r="1.6"/><circle cx="42.0" cy="5.8" r="1.8"/><circle cx="49.9" cy="89.7" r="1.6"/><circle cx="48.0" cy="93.6" r="1.8"/><circle cx="47.5" cy="94.6" r="1.6"/><circle cx="46.4" cy="94.9" r="2.1"/><circle cx="45.7" cy="95.8" r="1.5"/><circle cx="44.7" cy="96.1" r="1.7"/><circle cx="43.8" cy="96.6" r="1.8"/><circle cx="42.7" cy="97.5" r="1.8"/><circle cx="41.4" cy="98.8" r="1.5"/><circle cx="39.8" cy="99.4" r="2.1"/><circle cx="37.8" cy="100.0" r="1.9"/><circle cx="36.0" cy="99.7" r="2.0"/><circle cx="34.7" cy="98.4" r="2.5"/><circle cx="33.9" cy="96.8" r="2.3"/><circle cx="33.8" cy="94.9" r="2.4"/><circle cx="34.4" cy="93.0" r="2.6"/><circle cx="39.6" cy="88.6" r="4.0"/><circle cx="39.4" cy="87.9" r="3.2"/><circle cx="39.4" cy="87.3" r="3.0"/><circle cx="39.6" cy="86.5" r="3.4"/><circle cx="39.6" cy="85.3" r="3.7"/><circle cx="39.5" cy="83.2" r="3.2"/><circle cx="40.2" cy="81.5" r="3.3"/><circle cx="41.3" cy="80.1" r="3.2"/><circle cx="42.9" cy="78.8" r="2.2"/><circle cx="44.4" cy="79.4" r="2.6"/><circle cx="45.9" cy="80.1" r="2.3"/><circle cx="47.2" cy="80.9" r="1.7"/><circle cx="48.2" cy="82.1" r="1.6"/><circle cx="49.1" cy="83.3" r="1.6"/><circle cx="49.6" cy="84.7" r="1.8"/><circle cx="50.1" cy="85.9" r="1.9"/><circle cx="50.3" cy="87.2" r="1.8"/><circle cx="50.4" cy="88.5" r="1.5"/><circle cx="4.8" cy="42.1" r="2.0"/><circle cx="3.8" cy="43.1" r="2.2"/><circle cx="2.2" cy="47.0" r="1.2"/><circle cx="1.9" cy="48.6" r="1.1"/><circle cx="1.1" cy="50.1" r="1.0"/><circle cx="-0.1" cy="51.3" r="1.2"/><circle cx="105.9" cy="51.3" r="1.2"/><circle cx="104.3" cy="51.9" r="1.3"/><circle cx="102.6" cy="52.1" r="1.5"/><circle cx="100.9" cy="51.9" r="1.5"/><circle cx="99.7" cy="44.0" r="3.3"/><circle cx="100.4" cy="43.0" r="3.4"/><circle cx="100.7" cy="42.4" r="3.4"/><circle cx="100.0" cy="41.8" r="3.0"/><circle cx="99.3" cy="40.9" r="3.1"/><circle cx="98.6" cy="39.7" r="3.0"/><circle cx="98.1" cy="38.2" r="2.6"/><circle cx="98.5" cy="36.9" r="2.7"/><circle cx="99.5" cy="36.2" r="3.2"/><circle cx="100.3" cy="35.0" r="2.5"/><circle cx="101.6" cy="34.5" r="2.6"/><circle cx="102.9" cy="34.3" r="2.7"/><circle cx="-0.5" cy="34.6" r="2.6"/><circle cx="105.5" cy="34.6" r="2.6"/><circle cx="0.5" cy="35.7" r="3.2"/><circle cx="106.5" cy="35.7" r="3.2"/><circle cx="1.5" cy="36.4" r="2.9"/><circle cx="107.5" cy="36.4" r="2.9"/><circle cx="2.2" cy="37.2" r="3.0"/><circle cx="108.2" cy="37.2" r="3.0"/><circle cx="2.9" cy="38.1" r="3.2"/><circle cx="108.9" cy="38.1" r="3.2"/><circle cx="4.1" cy="38.7" r="2.6"/><circle cx="4.6" cy="39.8" r="2.7"/><circle cx="4.9" cy="40.9" r="2.5"/><circle cx="69.8" cy="13.9" r="1.0"/><circle cx="67.7" cy="19.1" r="1.5"/><circle cx="66.9" cy="20.2" r="2.0"/><circle cx="66.2" cy="21.6" r="1.9"/><circle cx="65.0" cy="22.6" r="2.0"/><circle cx="63.4" cy="22.5" r="2.7"/><circle cx="62.0" cy="22.2" r="2.6"/><circle cx="60.6" cy="21.1" r="3.0"/><circle cx="59.7" cy="19.8" r="3.3"/><circle cx="59.0" cy="19.1" r="2.9"/><circle cx="58.5" cy="18.1" r="3.6"/><circle cx="57.8" cy="17.8" r="3.5"/><circle cx="57.0" cy="17.6" r="3.5"/><circle cx="55.8" cy="17.4" r="3.1"/><circle cx="53.0" cy="15.2" r="3.1"/><circle cx="52.1" cy="13.9" r="3.0"/><circle cx="51.3" cy="12.5" r="2.7"/><circle cx="51.1" cy="10.8" r="2.6"/><circle cx="51.7" cy="9.4" r="2.7"/><circle cx="52.6" cy="8.1" r="2.2"/><circle cx="54.2" cy="7.5" r="2.1"/><circle cx="55.9" cy="7.4" r="2.0"/><circle cx="60.6" cy="7.7" r="2.4"/><circle cx="61.7" cy="7.3" r="2.4"/><circle cx="62.9" cy="7.2" r="2.4"/><circle cx="64.2" cy="7.1" r="1.9"/><circle cx="65.2" cy="7.7" r="2.1"/><circle cx="66.3" cy="8.3" r="1.8"/><circle cx="67.4" cy="9.1" r="1.5"/><circle cx="68.4" cy="10.0" r="1.3"/><circle cx="68.9" cy="11.3" r="1.5"/><circle cx="69.5" cy="12.5" r="1.4"/><circle cx="15.0" cy="1.9" r="2.6"/><circle cx="15.0" cy="107.9" r="2.6"/><circle cx="14.9" cy="3.4" r="2.6"/><circle cx="14.0" cy="4.7" r="3.1"/><circle cx="13.6" cy="6.1" r="2.3"/><circle cx="9.4" cy="9.7" r="1.4"/><circle cx="8.4" cy="10.5" r="1.2"/><circle cx="7.2" cy="11.0" r="1.3"/><circle cx="6.0" cy="11.4" r="1.3"/><circle cx="4.7" cy="11.5" r="1.2"/><circle cx="3.4" cy="11.2" r="1.4"/><circle cx="2.2" cy="10.9" r="1.2"/><circle cx="1.1" cy="10.2" r="1.3"/><circle cx="107.1" cy="10.2" r="1.3"/><circle cx="0.2" cy="9.4" r="1.6"/><circle cx="106.2" cy="9.4" r="1.6"/><circle cx="-0.8" cy="9.0" r="1.4"/><circle cx="105.2" cy="9.0" r="1.4"/><circle cx="-1.6" cy="8.2" r="1.8"/><circle cx="104.4" cy="8.2" r="1.8"/><circle cx="103.4" cy="7.6" r="1.8"/><circle cx="102.3" cy="7.0" r="1.6"/><circle cx="101.9" cy="5.8" r="2.2"/><circle cx="101.4" cy="4.8" r="2.4"/><circle cx="100.8" cy="3.7" r="2.3"/><circle cx="100.2" cy="2.5" r="2.2"/><circle cx="99.7" cy="1.2" r="2.1"/><circle cx="99.7" cy="107.2" r="2.1"/><circle cx="102.3" cy="99.2" r="2.2"/><circle cx="-1.9" cy="99.1" r="2.5"/><circle cx="104.1" cy="99.1" r="2.5"/><circle cx="-0.2" cy="99.5" r="2.8"/><circle cx="105.8" cy="99.5" r="2.8"/><circle cx="1.2" cy="99.8" r="2.5"/><circle cx="107.2" cy="99.8" r="2.5"/><circle cx="2.5" cy="100.8" r="2.9"/><circle cx="108.5" cy="100.8" r="2.9"/><circle cx="3.5" cy="100.8" r="2.3"/><circle cx="4.4" cy="101.4" r="2.7"/><circle cx="5.2" cy="101.5" r="2.6"/><circle cx="5.9" cy="102.2" r="3.4"/><circle cx="6.7" cy="-3.5" r="3.6"/><circle cx="6.7" cy="102.5" r="3.6"/><circle cx="7.4" cy="-3.1" r="3.9"/><circle cx="7.4" cy="102.9" r="3.9"/><circle cx="8.5" cy="-3.0" r="3.6"/><circle cx="8.5" cy="103.0" r="3.6"/><circle cx="9.7" cy="-2.8" r="3.4"/><circle cx="9.7" cy="103.2" r="3.4"/><circle cx="10.8" cy="-2.3" r="3.4"/><circle cx="10.8" cy="103.7" r="3.4"/><circle cx="12.2" cy="-1.7" r="3.1"/><circle cx="12.2" cy="104.3" r="3.1"/><circle cx="13.3" cy="-0.7" r="3.2"/><circle cx="13.3" cy="105.3" r="3.2"/><circle cx="14.2" cy="0.5" r="3.1"/><circle cx="14.2" cy="106.5" r="3.1"/><circle cx="94.5" cy="91.5" r="2.0"/><circle cx="94.1" cy="93.0" r="2.5"/><circle cx="93.5" cy="94.4" r="2.4"/><circle cx="92.5" cy="95.6" r="2.5"/><circle cx="91.1" cy="96.3" r="2.8"/><circle cx="89.6" cy="96.7" r="3.3"/><circle cx="88.4" cy="97.1" r="3.6"/><circle cx="87.4" cy="97.4" r="3.5"/><circle cx="86.5" cy="97.9" r="3.0"/><circle cx="83.6" cy="96.8" r="3.4"/><circle cx="82.7" cy="97.3" r="2.7"/><circle cx="81.7" cy="97.7" r="2.4"/><circle cx="80.5" cy="97.9" r="2.7"/><circle cx="79.0" cy="98.3" r="2.6"/><circle cx="77.2" cy="98.3" r="2.3"/><circle cx="75.9" cy="97.6" r="2.4"/><circle cx="75.1" cy="96.4" r="2.5"/><circle cx="75.0" cy="94.9" r="3.0"/><circle cx="74.8" cy="93.5" r="2.5"/><circle cx="75.1" cy="92.2" r="2.6"/><circle cx="75.1" cy="90.9" r="2.3"/><circle cx="75.6" cy="89.7" r="2.7"/><circle cx="75.9" cy="88.5" r="2.7"/><circle cx="79.1" cy="85.0" r="2.2"/><circle cx="80.1" cy="84.4" r="1.7"/><circle cx="81.3" cy="84.1" r="1.9"/><circle cx="82.3" cy="83.5" r="1.6"/><circle cx="83.5" cy="83.0" r="1.4"/><circle cx="84.8" cy="82.7" r="1.3"/><circle cx="86.1" cy="82.8" r="1.0"/><circle cx="87.2" cy="83.4" r="1.0"/><circle cx="88.1" cy="84.4" r="1.2"/><circle cx="88.9" cy="85.4" r="1.2"/><circle cx="89.8" cy="86.2" r="1.1"/><circle cx="93.8" cy="90.1" r="2.1"/><circle cx="-1.6" cy="70.0" r="2.0"/><circle cx="104.4" cy="70.0" r="2.0"/><circle cx="104.1" cy="71.2" r="1.7"/><circle cx="100.5" cy="74.3" r="2.1"/><circle cx="99.8" cy="74.9" r="2.4"/><circle cx="99.0" cy="75.4" r="2.8"/><circle cx="98.4" cy="76.7" r="2.1"/><circle cx="97.4" cy="77.1" r="2.6"/><circle cx="96.3" cy="77.9" r="2.3"/><circle cx="95.1" cy="78.0" r="2.8"/><circle cx="90.4" cy="78.6" r="2.7"/><circle cx="88.8" cy="78.0" r="2.5"/><circle cx="87.8" cy="76.7" r="2.5"/><circle cx="87.8" cy="74.8" r="3.0"/><circle cx="88.1" cy="73.1" r="3.0"/><circle cx="89.2" cy="71.5" r="3.5"/><circle cx="90.3" cy="70.4" r="3.7"/><circle cx="90.8" cy="69.6" r="3.4"/><circle cx="90.8" cy="68.7" r="2.8"/><circle cx="91.3" cy="68.0" r="3.1"/><circle cx="91.2" cy="67.1" r="2.8"/><circle cx="91.3" cy="66.1" r="2.5"/><circle cx="91.7" cy="65.2" r="2.5"/><circle cx="92.3" cy="64.3" r="2.6"/><circle cx="93.0" cy="63.2" r="2.5"/><circle cx="98.0" cy="59.5" r="1.3"/><circle cx="99.7" cy="59.8" r="1.0"/><circle cx="100.9" cy="60.9" r="1.3"/><circle cx="102.1" cy="62.0" r="0.9"/><circle cx="102.7" cy="63.5" r="1.3"/><circle cx="103.5" cy="64.7" r="1.3"/><circle cx="104.0" cy="66.0" r="1.5"/><circle cx="-1.4" cy="67.2" r="1.4"/><circle cx="104.6" cy="67.2" r="1.4"/><circle cx="-1.5" cy="68.6" r="2.0"/><circle cx="104.5" cy="68.6" r="2.0"/><circle cx="56.2" cy="33.6" r="1.2"/><circle cx="56.5" cy="34.6" r="1.5"/><circle cx="57.3" cy="35.9" r="1.4"/><circle cx="57.5" cy="37.3" r="1.9"/><circle cx="57.2" cy="38.7" r="2.4"/><circle cx="56.5" cy="39.9" r="2.4"/><circle cx="55.5" cy="40.9" r="2.2"/><circle cx="53.9" cy="40.8" r="2.8"/><circle cx="50.2" cy="41.3" r="2.7"/><circle cx="49.1" cy="40.6" r="3.5"/><circle cx="47.9" cy="40.6" r="2.8"/><circle cx="47.1" cy="39.6" r="2.9"/><circle cx="46.6" cy="38.5" r="3.1"/><circle cx="46.2" cy="37.4" r="3.3"/><circle cx="45.3" cy="36.9" r="2.9"/><circle cx="44.5" cy="36.2" r="2.9"/><circle cx="43.8" cy="32.0" r="2.3"/><circle cx="45.3" cy="31.4" r="3.0"/><circle cx="45.8" cy="30.7" r="2.7"/><circle cx="46.1" cy="29.7" r="2.3"/><circle cx="46.7" cy="28.9" r="3.0"/><circle cx="46.9" cy="27.4" r="2.7"/><circle cx="47.7" cy="26.3" r="3.0"/><circle cx="48.7" cy="25.0" r="2.4"/><circle cx="50.1" cy="24.3" r="1.9"/><circle cx="51.6" cy="24.6" r="1.9"/><circle cx="53.0" cy="25.0" r="1.8"/><circle cx="54.4" cy="25.5" r="1.5"/><circle cx="55.5" cy="26.4" r="1.6"/><circle cx="56.5" cy="27.4" r="1.4"/><circle cx="56.8" cy="31.5" r="0.9"/><circle cx="56.2" cy="32.7" r="1.2"/><circle cx="67.4" cy="96.4" r="1.7"/><circle cx="67.1" cy="97.3" r="1.7"/><circle cx="67.3" cy="98.3" r="1.4"/><circle cx="67.5" cy="99.5" r="1.3"/><circle cx="67.8" cy="101.2" r="1.0"/><circle cx="67.5" cy="102.7" r="1.2"/><circle cx="66.8" cy="104.3" r="1.1"/><circle cx="60.7" cy="-0.0" r="1.9"/><circle cx="60.7" cy="106.0" r="1.9"/><circle cx="59.2" cy="-0.9" r="1.7"/><circle cx="59.2" cy="105.1" r="1.7"/><circle cx="58.5" cy="103.1" r="2.5"/><circle cx="58.3" cy="101.3" r="2.6"/><circle cx="58.4" cy="99.7" r="2.8"/><circle cx="58.3" cy="98.9" r="2.2"/><circle cx="58.3" cy="98.0" r="2.5"/><circle cx="57.9" cy="97.4" r="2.7"/><circle cx="56.7" cy="96.8" r="2.4"/><circle cx="55.9" cy="95.9" r="2.6"/><circle cx="55.3" cy="94.7" r="2.7"/><circle cx="55.4" cy="93.4" r="3.0"/><circle cx="55.8" cy="92.2" r="3.1"/><circle cx="59.7" cy="89.2" r="3.0"/><circle cx="61.0" cy="89.4" r="3.4"/><circle cx="62.2" cy="89.2" r="2.7"/><circle cx="63.4" cy="89.7" r="2.7"/><circle cx="64.2" cy="90.8" r="3.6"/><circle cx="65.1" cy="91.2" r="3.6"/><circle cx="66.4" cy="91.3" r="2.8"/><circle cx="67.4" cy="91.9" r="2.5"/><circle cx="67.6" cy="93.2" r="2.8"/><circle cx="67.7" cy="94.3" r="2.5"/><circle cx="67.7" cy="95.4" r="1.9"/><circle cx="2.9" cy="22.1" r="3.1"/><circle cx="108.9" cy="22.1" r="3.1"/><circle cx="3.3" cy="23.8" r="2.5"/><circle cx="2.2" cy="25.2" r="2.8"/><circle cx="108.2" cy="25.2" r="2.8"/><circle cx="0.3" cy="25.9" r="3.6"/><circle cx="106.3" cy="25.9" r="3.6"/><circle cx="-1.2" cy="26.4" r="3.8"/><circle cx="104.8" cy="26.4" r="3.8"/><circle cx="-2.3" cy="26.9" r="3.5"/><circle cx="103.7" cy="26.9" r="3.5"/><circle cx="102.8" cy="27.4" r="3.0"/><circle cx="99.7" cy="26.2" r="3.1"/><circle cx="99.1" cy="25.5" r="3.2"/><circle cx="98.4" cy="25.9" r="2.3"/><circle cx="97.6" cy="26.1" r="2.5"/><circle cx="96.2" cy="26.9" r="2.2"/><circle cx="94.5" cy="27.4" r="2.3"/><circle cx="92.5" cy="27.4" r="2.0"/><circle cx="90.9" cy="26.7" r="1.6"/><circle cx="90.3" cy="25.2" r="1.9"/><circle cx="89.8" cy="23.7" r="1.6"/><circle cx="90.1" cy="22.1" r="1.9"/><circle cx="90.3" cy="20.6" r="2.0"/><circle cx="90.5" cy="19.1" r="1.8"/><circle cx="91.2" cy="17.7" r="1.7"/><circle cx="92.5" cy="16.8" r="1.8"/><circle cx="94.0" cy="16.3" r="1.7"/><circle cx="95.6" cy="16.4" r="1.7"/><circle cx="98.9" cy="16.6" r="1.6"/><circle cx="99.8" cy="16.2" r="1.7"/><circle cx="101.0" cy="15.7" r="1.3"/><circle cx="102.0" cy="16.0" r="1.4"/><circle cx="102.8" cy="16.8" r="1.8"/><circle cx="103.7" cy="17.4" r="1.7"/><circle cx="-1.6" cy="18.2" r="2.1"/><circle cx="104.4" cy="18.2" r="2.1"/><circle cx="-0.0" cy="18.5" r="1.7"/><circle cx="106.0" cy="18.5" r="1.7"/><circle cx="1.0" cy="19.5" r="2.5"/><circle cx="107.0" cy="19.5" r="2.5"/><circle cx="2.3" cy="20.6" r="2.8"/><circle cx="108.3" cy="20.6" r="2.8"/><circle cx="92.3" cy="51.1" r="2.8"/><circle cx="94.3" cy="57.0" r="2.7"/><circle cx="93.4" cy="58.3" r="2.7"/><circle cx="92.0" cy="59.0" r="2.9"/><circle cx="90.5" cy="59.4" r="2.7"/><circle cx="88.8" cy="59.1" r="3.0"/><circle cx="87.6" cy="59.4" r="2.1"/><circle cx="86.3" cy="59.0" r="2.2"/><circle cx="85.1" cy="58.5" r="2.2"/><circle cx="84.1" cy="58.2" r="1.7"/><circle cx="83.2" cy="57.5" r="1.8"/><circle cx="82.4" cy="56.9" r="1.6"/><circle cx="81.6" cy="56.3" r="1.6"/><circle cx="80.6" cy="56.0" r="1.3"/><circle cx="79.3" cy="55.8" r="1.1"/><circle cx="77.8" cy="55.3" r="1.1"/><circle cx="76.3" cy="54.5" r="1.1"/><circle cx="74.9" cy="53.4" r="0.9"/><circle cx="74.3" cy="51.9" r="1.1"/><circle cx="77.5" cy="46.7" r="1.8"/><circle cx="78.5" cy="45.8" r="1.9"/><circle cx="79.5" cy="45.0" r="2.2"/><circle cx="80.4" cy="44.1" r="2.1"/><circle cx="81.6" cy="43.8" r="3.0"/><circle cx="82.8" cy="43.4" r="3.2"/><circle cx="83.9" cy="42.8" r="2.6"/><circle cx="85.1" cy="43.5" r="3.4"/><circle cx="86.2" cy="43.2" r="2.6"/><circle cx="87.3" cy="43.8" r="3.0"/><circle cx="88.2" cy="44.3" r="3.2"/><circle cx="89.1" cy="45.0" r="3.5"/><circle cx="90.3" cy="45.1" r="2.5"/><circle cx="90.7" cy="46.3" r="3.0"/><circle cx="91.2" cy="47.2" r="2.6"/><circle cx="91.4" cy="48.2" r="2.5"/><circle cx="91.6" cy="49.2" r="2.4"/><circle cx="91.5" cy="50.2" r="2.9"/><circle cx="36.9" cy="73.0" r="1.9"/><circle cx="36.6" cy="74.2" r="1.9"/><circle cx="36.2" cy="75.4" r="1.9"/><circle cx="35.1" cy="76.2" r="2.3"/><circle cx="34.2" cy="76.9" r="2.0"/><circle cx="33.2" cy="77.3" r="1.9"/><circle cx="32.1" cy="77.4" r="2.4"/><circle cx="30.0" cy="80.0" r="2.3"/><circle cx="28.9" cy="81.4" r="1.9"/><circle cx="27.4" cy="82.1" r="2.1"/><circle cx="25.8" cy="82.3" r="2.2"/><circle cx="24.4" cy="81.7" r="2.6"/><circle cx="23.4" cy="80.5" r="3.1"/><circle cx="22.1" cy="79.7" r="2.5"/><circle cx="22.0" cy="77.9" r="3.4"/><circle cx="21.4" cy="76.8" r="2.9"/><circle cx="22.2" cy="75.1" r="3.9"/><circle cx="24.6" cy="70.8" r="3.1"/><circle cx="24.8" cy="70.0" r="3.3"/><circle cx="24.3" cy="68.5" r="2.5"/><circle cx="24.5" cy="67.1" r="2.3"/><circle cx="25.3" cy="66.1" r="2.6"/><circle cx="26.2" cy="64.9" r="2.1"/><circle cx="27.5" cy="64.6" r="2.2"/><circle cx="28.9" cy="64.4" r="1.9"/><circle cx="30.2" cy="64.4" r="1.7"/><circle cx="31.6" cy="64.5" r="1.4"/><circle cx="33.0" cy="64.8" r="1.3"/><circle cx="34.3" cy="65.5" r="1.5"/><circle cx="36.9" cy="70.4" r="1.8"/><circle cx="37.1" cy="71.7" r="1.6"/><circle cx="72.6" cy="81.3" r="1.6"/><circle cx="72.3" cy="82.4" r="2.1"/><circle cx="71.9" cy="83.5" r="2.1"/><circle cx="70.6" cy="83.7" r="3.0"/><circle cx="69.8" cy="84.2" r="2.6"/><circle cx="68.9" cy="84.3" r="2.8"/><circle cx="68.2" cy="84.5" r="2.8"/><circle cx="67.4" cy="84.4" r="3.1"/><circle cx="66.6" cy="84.2" r="3.1"/><circle cx="65.5" cy="84.3" r="2.7"/><circle cx="63.8" cy="84.3" r="1.9"/><circle cx="62.4" cy="83.5" r="1.7"/><circle cx="63.6" cy="79.5" r="1.4"/><circle cx="64.7" cy="78.9" r="1.4"/><circle cx="65.5" cy="78.3" r="1.4"/><circle cx="66.4" cy="78.0" r="1.8"/><circle cx="67.2" cy="77.4" r="1.5"/><circle cx="68.2" cy="77.1" r="1.8"/><circle cx="69.5" cy="76.5" r="1.5"/><circle cx="71.1" cy="76.3" r="1.2"/><circle cx="72.8" cy="78.6" r="1.5"/><circle cx="72.7" cy="80.1" r="1.6"/><circle cx="39.0" cy="39.7" r="1.7"/><circle cx="39.9" cy="40.9" r="1.9"/><circle cx="40.5" cy="42.5" r="2.1"/><circle cx="40.1" cy="44.0" r="2.5"/><circle cx="38.9" cy="44.9" r="2.7"/><circle cx="37.5" cy="45.5" r="2.5"/><circle cx="36.1" cy="45.7" r="2.2"/><circle cx="34.7" cy="45.3" r="2.8"/><circle cx="33.5" cy="45.4" r="2.3"/><circle cx="32.5" cy="44.8" r="2.3"/><circle cx="31.9" cy="43.5" r="2.4"/><circle cx="31.6" cy="42.5" r="2.3"/><circle cx="29.5" cy="39.7" r="2.4"/><circle cx="29.5" cy="38.7" r="2.8"/><circle cx="29.4" cy="37.5" r="2.6"/><circle cx="29.0" cy="36.0" r="2.1"/><circle cx="29.5" cy="34.5" r="2.5"/><circle cx="30.1" cy="32.6" r="1.9"/><circle cx="31.6" cy="31.8" r="1.8"/><circle cx="33.3" cy="31.8" r="1.2"/><circle cx="34.8" cy="32.9" r="1.1"/><circle cx="35.9" cy="34.3" r="1.0"/><circle cx="36.6" cy="35.3" r="0.8"/><circle cx="38.3" cy="38.8" r="1.4"/><circle cx="12.0" cy="71.8" r="1.5"/><circle cx="10.8" cy="72.5" r="1.3"/><circle cx="9.4" cy="72.6" r="1.4"/><circle cx="8.2" cy="72.9" r="1.3"/><circle cx="6.8" cy="73.1" r="1.2"/><circle cx="5.6" cy="72.6" r="1.2"/><circle cx="4.9" cy="71.4" r="1.4"/><circle cx="4.4" cy="70.4" r="1.3"/><circle cx="4.0" cy="69.4" r="1.6"/><circle cx="3.8" cy="68.4" r="1.9"/><circle cx="5.1" cy="65.9" r="2.5"/><circle cx="5.7" cy="65.3" r="3.6"/><circle cx="5.9" cy="63.8" r="3.3"/><circle cx="6.9" cy="62.8" r="2.8"/><circle cx="8.2" cy="62.8" r="2.2"/><circle cx="9.1" cy="63.9" r="2.5"/><circle cx="10.1" cy="64.3" r="1.8"/><circle cx="10.8" cy="65.1" r="1.8"/><circle cx="11.2" cy="66.0" r="1.5"/><circle cx="11.2" cy="67.0" r="1.6"/><circle cx="67.3" cy="45.9" r="2.0"/><circle cx="66.1" cy="46.4" r="2.1"/><circle cx="65.7" cy="46.8" r="2.3"/><circle cx="65.9" cy="47.6" r="2.8"/><circle cx="65.9" cy="48.8" r="3.0"/><circle cx="65.5" cy="50.2" r="2.7"/><circle cx="64.4" cy="51.1" r="2.5"/><circle cx="63.1" cy="50.8" r="3.3"/><circle cx="60.5" cy="48.5" r="2.5"/><circle cx="60.2" cy="47.4" r="2.0"/><circle cx="59.9" cy="46.4" r="1.6"/><circle cx="59.7" cy="45.4" r="1.3"/><circle cx="59.9" cy="44.3" r="1.0"/><circle cx="60.8" cy="43.5" r="1.0"/><circle cx="61.6" cy="43.0" r="1.0"/><circle cx="62.4" cy="42.3" r="1.3"/><circle cx="63.2" cy="41.2" r="1.5"/><circle cx="64.4" cy="40.1" r="1.4"/><circle cx="65.9" cy="40.2" r="2.0"/><circle cx="67.5" cy="40.4" r="1.7"/><circle cx="68.5" cy="41.8" r="2.2"/><circle cx="68.9" cy="43.2" r="2.1"/><circle cx="68.2" cy="44.9" r="2.5"/><circle cx="31.9" cy="94.7" r="1.2"/><circle cx="32.1" cy="96.2" r="1.3"/><circle cx="31.5" cy="97.6" r="2.0"/><circle cx="30.5" cy="98.7" r="2.3"/><circle cx="28.9" cy="98.9" r="2.3"/><circle cx="27.4" cy="97.8" r="2.6"/><circle cx="25.7" cy="96.1" r="3.0"/><circle cx="24.5" cy="96.7" r="2.6"/><circle cx="23.1" cy="96.7" r="2.4"/><circle cx="21.8" cy="96.0" r="2.7"/><circle cx="20.5" cy="94.7" r="2.2"/><circle cx="20.6" cy="93.1" r="2.0"/><circle cx="22.0" cy="92.1" r="2.1"/><circle cx="23.8" cy="92.0" r="2.3"/><circle cx="24.9" cy="91.8" r="2.1"/><circle cx="25.7" cy="91.7" r="2.3"/><circle cx="29.4" cy="91.9" r="1.2"/><circle cx="30.6" cy="92.4" r="1.0"/><circle cx="31.5" cy="93.4" r="1.0"/><circle cx="51.5" cy="3.6" r="1.4"/><circle cx="52.3" cy="4.9" r="1.7"/><circle cx="52.9" cy="6.6" r="1.8"/><circle cx="52.3" cy="8.1" r="1.9"/><circle cx="50.6" cy="8.6" r="2.4"/><circle cx="49.1" cy="8.4" r="2.4"/><circle cx="47.8" cy="7.3" r="3.1"/><circle cx="47.1" cy="6.2" r="3.3"/><circle cx="46.6" cy="5.6" r="2.6"/><circle cx="46.5" cy="4.9" r="2.7"/><circle cx="45.4" cy="5.0" r="2.1"/><circle cx="44.3" cy="4.6" r="2.3"/><circle cx="43.0" cy="3.6" r="1.9"/><circle cx="42.7" cy="2.3" r="1.6"/><circle cx="43.3" cy="1.1" r="1.8"/><circle cx="43.3" cy="107.1" r="1.8"/><circle cx="44.2" cy="0.1" r="2.2"/><circle cx="44.2" cy="106.1" r="2.2"/><circle cx="47.8" cy="-1.3" r="1.6"/><circle cx="47.8" cy="104.7" r="1.6"/><circle cx="48.9" cy="-0.6" r="1.4"/><circle cx="48.9" cy="105.4" r="1.4"/><circle cx="49.9" cy="-0.0" r="1.1"/><circle cx="49.9" cy="106.0" r="1.1"/><circle cx="50.6" cy="0.9" r="1.2"/><circle cx="50.6" cy="106.9" r="1.2"/><circle cx="50.9" cy="1.8" r="1.1"/><circle cx="51.2" cy="2.7" r="1.0"/><circle cx="42.6" cy="21.3" r="1.9"/><circle cx="41.5" cy="21.9" r="2.2"/><circle cx="40.6" cy="21.8" r="2.4"/><circle cx="39.7" cy="23.6" r="1.7"/><circle cx="38.0" cy="24.1" r="1.2"/><circle cx="37.2" cy="22.7" r="1.1"/><circle cx="37.7" cy="21.3" r="1.4"/><circle cx="38.5" cy="20.4" r="1.0"/><circle cx="39.2" cy="20.0" r="1.1"/><circle cx="39.6" cy="18.7" r="0.8"/><circle cx="40.9" cy="18.5" r="0.8"/><circle cx="42.1" cy="18.9" r="1.1"/><circle cx="42.9" cy="20.0" r="1.9"/><circle cx="56.2" cy="75.3" r="0.9"/><circle cx="56.0" cy="76.3" r="0.9"/><circle cx="55.1" cy="76.9" r="1.3"/><circle cx="54.4" cy="77.7" r="1.3"/><circle cx="53.4" cy="78.0" r="1.3"/><circle cx="52.4" cy="77.5" r="1.7"/><circle cx="51.4" cy="76.9" r="1.7"/><circle cx="52.8" cy="74.6" r="2.5"/><circle cx="52.7" cy="73.6" r="2.0"/><circle cx="53.4" cy="72.7" r="1.7"/><circle cx="54.6" cy="72.3" r="1.4"/><circle cx="55.7" cy="73.0" r="1.0"/><circle cx="56.1" cy="74.2" r="0.8"/><circle cx="76.3" cy="-1.8" r="1.9"/><circle cx="76.3" cy="104.2" r="1.9"/><circle cx="75.3" cy="-1.2" r="2.1"/><circle cx="75.3" cy="104.8" r="2.1"/><circle cx="74.6" cy="-1.1" r="2.1"/><circle cx="74.6" cy="104.9" r="2.1"/><circle cx="74.5" cy="0.1" r="1.8"/><circle cx="74.5" cy="106.1" r="1.8"/><circle cx="73.5" cy="0.5" r="2.1"/><circle cx="73.5" cy="106.5" r="2.1"/><circle cx="72.4" cy="0.2" r="1.8"/><circle cx="72.4" cy="106.2" r="1.8"/><circle cx="71.6" cy="-0.7" r="1.6"/><circle cx="71.6" cy="105.3" r="1.6"/><circle cx="71.8" cy="104.2" r="1.3"/><circle cx="72.0" cy="103.2" r="0.9"/><circle cx="72.4" cy="102.1" r="0.7"/><circle cx="73.5" cy="101.7" r="0.7"/><circle cx="74.7" cy="101.5" r="0.9"/><circle cx="76.0" cy="101.8" r="1.5"/><circle cx="76.5" cy="103.0" r="1.8"/><circle cx="92.7" cy="35.9" r="1.3"/><circle cx="92.8" cy="37.0" r="0.7"/><circle cx="92.3" cy="38.3" r="0.6"/><circle cx="89.9" cy="39.1" r="1.2"/><circle cx="89.2" cy="37.7" r="1.6"/><circle cx="89.2" cy="36.7" r="2.1"/><circle cx="89.1" cy="36.2" r="2.1"/><circle cx="88.2" cy="35.5" r="1.7"/><circle cx="88.0" cy="34.3" r="2.1"/><circle cx="88.9" cy="33.6" r="1.9"/><circle cx="90.0" cy="33.6" r="1.6"/><circle cx="90.9" cy="33.9" r="1.7"/><circle cx="91.7" cy="34.3" r="1.5"/><circle cx="92.3" cy="35.0" r="1.3"/><circle cx="10.2" cy="31.6" r="0.9"/><circle cx="9.7" cy="32.8" r="1.1"/><circle cx="8.4" cy="32.8" r="1.3"/><circle cx="7.7" cy="32.8" r="1.6"/><circle cx="6.9" cy="33.1" r="1.6"/><circle cx="5.2" cy="33.1" r="1.3"/><circle cx="5.2" cy="31.6" r="1.8"/><circle cx="6.7" cy="31.0" r="1.8"/><circle cx="7.4" cy="31.1" r="2.1"/><circle cx="7.7" cy="31.0" r="2.3"/><circle cx="8.8" cy="29.7" r="1.6"/><circle cx="10.2" cy="30.2" r="1.0"/><circle cx="4.6" cy="58.4" r="1.4"/><circle cx="4.1" cy="59.1" r="1.0"/><circle cx="3.8" cy="60.1" r="0.9"/><circle cx="2.9" cy="61.0" r="1.1"/><circle cx="1.1" cy="59.7" r="2.2"/><circle cx="107.1" cy="59.7" r="2.2"/><circle cx="1.8" cy="58.6" r="2.2"/><circle cx="107.8" cy="58.6" r="2.2"/><circle cx="2.1" cy="58.3" r="2.5"/><circle cx="108.1" cy="58.3" r="2.5"/><circle cx="1.5" cy="57.4" r="1.9"/><circle cx="107.5" cy="57.4" r="1.9"/><circle cx="1.8" cy="56.2" r="1.4"/><circle cx="2.9" cy="55.7" r="1.2"/><circle cx="4.0" cy="56.4" r="1.2"/><circle cx="4.6" cy="57.4" r="1.4"/><circle cx="102.1" cy="92.3" r="1.4"/><circle cx="101.9" cy="92.7" r="2.0"/><circle cx="102.2" cy="93.8" r="2.3"/><circle cx="101.5" cy="94.9" r="2.3"/><circle cx="100.5" cy="94.2" r="2.3"/><circle cx="99.8" cy="93.7" r="1.7"/><circle cx="99.2" cy="93.1" r="1.2"/><circle cx="99.0" cy="92.3" r="0.8"/><circle cx="98.9" cy="91.2" r="0.7"/><circle cx="99.4" cy="90.3" r="0.8"/><circle cx="100.3" cy="89.4" r="1.0"/><circle cx="101.7" cy="89.1" r="1.6"/><circle cx="102.7" cy="90.1" r="1.3"/><circle cx="102.2" cy="91.6" r="1.5"/><circle cx="95.2" cy="103.5" r="0.8"/><circle cx="94.4" cy="104.2" r="0.9"/><circle cx="94.0" cy="-1.1" r="1.3"/><circle cx="94.0" cy="104.9" r="1.3"/><circle cx="93.1" cy="-0.7" r="2.1"/><circle cx="93.1" cy="105.3" r="2.1"/><circle cx="92.1" cy="-0.7" r="1.8"/><circle cx="92.1" cy="105.3" r="1.8"/><circle cx="91.6" cy="103.5" r="1.6"/><circle cx="92.4" cy="103.0" r="1.9"/><circle cx="92.6" cy="102.5" r="1.5"/><circle cx="93.1" cy="101.5" r="1.5"/><circle cx="94.8" cy="100.7" r="1.1"/><circle cx="95.5" cy="102.1" r="0.9"/><circle cx="15.1" cy="39.2" r="1.4"/><circle cx="14.1" cy="39.9" r="1.7"/><circle cx="13.8" cy="40.4" r="1.4"/><circle cx="13.5" cy="41.2" r="1.8"/><circle cx="12.7" cy="42.4" r="1.8"/><circle cx="11.3" cy="42.4" r="1.7"/><circle cx="10.5" cy="40.2" r="1.8"/><circle cx="11.3" cy="39.2" r="1.9"/><circle cx="11.2" cy="38.6" r="1.5"/><circle cx="11.0" cy="37.6" r="1.4"/><circle cx="11.5" cy="36.3" r="0.8"/><circle cx="12.7" cy="35.6" r="0.7"/><circle cx="14.2" cy="35.6" r="0.8"/><circle cx="15.2" cy="36.8" r="1.1"/><circle cx="15.3" cy="38.1" r="1.3"/><circle cx="20.4" cy="101.3" r="1.8"/><circle cx="20.0" cy="102.1" r="2.3"/><circle cx="19.0" cy="102.2" r="2.3"/><circle cx="18.5" cy="102.0" r="1.9"/><circle cx="17.9" cy="102.3" r="1.9"/><circle cx="16.5" cy="102.4" r="1.3"/><circle cx="15.3" cy="101.3" r="0.9"/><circle cx="16.5" cy="100.1" r="0.9"/><circle cx="17.7" cy="99.9" r="1.1"/><circle cx="18.5" cy="99.6" r="1.1"/><circle cx="19.5" cy="99.6" r="1.2"/><circle cx="20.4" cy="100.2" r="1.5"/><circle cx="47.0" cy="16.3" r="1.7"/><circle cx="47.5" cy="17.1" r="1.8"/><circle cx="47.3" cy="18.2" r="1.7"/><circle cx="46.4" cy="19.1" r="1.4"/><circle cx="45.3" cy="18.2" r="1.3"/><circle cx="44.9" cy="17.3" r="1.1"/><circle cx="43.6" cy="15.7" r="0.7"/><circle cx="44.1" cy="14.6" r="1.0"/><circle cx="45.2" cy="14.2" r="1.5"/><circle cx="46.2" cy="14.6" r="2.1"/><circle cx="47.1" cy="14.7" r="2.0"/><circle cx="46.8" cy="15.9" r="2.2"/><circle cx="10.1" cy="18.4" r="1.4"/><circle cx="9.6" cy="19.6" r="1.6"/><circle cx="8.5" cy="20.1" r="1.8"/><circle cx="7.0" cy="19.0" r="2.4"/><circle cx="6.1" cy="19.8" r="1.9"/><circle cx="5.0" cy="19.5" r="1.9"/><circle cx="4.1" cy="18.4" r="1.4"/><circle cx="4.8" cy="17.3" r="1.6"/><circle cx="5.9" cy="16.8" r="1.3"/><circle cx="6.7" cy="16.6" r="1.1"/><circle cx="7.6" cy="16.5" r="1.0"/><circle cx="8.6" cy="16.6" r="0.9"/><circle cx="9.8" cy="17.2" r="0.9"/><circle cx="46.9" cy="75.9" r="1.2"/><circle cx="81.7" cy="73.5" r="1.2"/><circle cx="97.8" cy="84.9" r="1.6"/><circle cx="57.5" cy="82.9" r="1.3"/><circle cx="33.3" cy="28.0" r="1.3"/><circle cx="102.8" cy="57.3" r="1.2"/><circle cx="33.8" cy="50.3" r="1.0"/><circle cx="37.1" cy="28.6" r="1.3"/><circle cx="37.6" cy="27.7" r="0.9"/><circle cx="21.0" cy="38.7" r="1.2"/><circle cx="21.4" cy="37.9" r="0.9"/><circle cx="76.2" cy="76.6" r="1.1"/><circle cx="76.0" cy="76.9" r="0.7"/><circle cx="100.7" cy="54.7" r="1.1"/><circle cx="16.1" cy="12.8" r="1.1"/><circle cx="15.1" cy="12.5" r="0.8"/><circle cx="24.8" cy="86.0" r="1.0"/><circle cx="73.7" cy="19.5" r="1.0"/><circle cx="68.8" cy="2.0" r="1.3"/><circle cx="69.9" cy="1.5" r="0.9"/><circle cx="86.0" cy="23.9" r="1.3"/><circle cx="87.2" cy="27.5" r="0.9"/><circle cx="87.6" cy="27.5" r="0.7"/><circle cx="32.7" cy="23.1" r="0.9"/><circle cx="58.9" cy="78.5" r="1.1"/><circle cx="80.9" cy="76.8" r="1.2"/><circle cx="80.5" cy="77.6" r="0.8"/></g><g fill="#2243b0"><circle cx="48.0" cy="59.3" r="4.3"/><circle cx="51.8" cy="59.3" r="4.6"/><circle cx="50.8" cy="60.2" r="4.4"/><circle cx="50.3" cy="61.5" r="3.8"/><circle cx="48.6" cy="61.8" r="4.2"/><circle cx="47.5" cy="62.3" r="3.6"/><circle cx="45.0" cy="64.4" r="4.3"/><circle cx="40.4" cy="65.4" r="3.6"/><circle cx="39.7" cy="63.5" r="4.4"/><circle cx="40.2" cy="59.8" r="3.7"/><circle cx="45.1" cy="57.8" r="3.9"/><circle cx="47.3" cy="58.8" r="4.6"/><circle cx="48.0" cy="59.3" r="4.1"/><circle cx="47.8" cy="56.8" r="3.8"/><circle cx="50.2" cy="54.3" r="3.6"/><circle cx="51.4" cy="55.9" r="3.7"/><circle cx="51.6" cy="57.2" r="4.3"/><circle cx="19.6" cy="54.3" r="3.8"/><circle cx="23.5" cy="53.8" r="3.8"/><circle cx="24.0" cy="56.2" r="3.9"/><circle cx="22.3" cy="57.0" r="3.4"/><circle cx="19.8" cy="55.8" r="4.3"/><circle cx="19.3" cy="55.1" r="4.2"/><circle cx="18.6" cy="55.6" r="4.1"/><circle cx="16.4" cy="55.8" r="3.8"/><circle cx="16.2" cy="54.2" r="3.9"/><circle cx="15.1" cy="51.7" r="3.3"/><circle cx="15.6" cy="50.0" r="3.7"/><circle cx="17.9" cy="48.7" r="3.6"/><circle cx="20.0" cy="49.3" r="3.8"/><circle cx="21.7" cy="51.6" r="3.8"/><circle cx="21.9" cy="53.3" r="4.1"/><circle cx="84.1" cy="10.0" r="3.3"/><circle cx="89.5" cy="10.5" r="2.9"/><circle cx="89.5" cy="13.5" r="3.1"/><circle cx="86.5" cy="14.0" r="3.6"/><circle cx="84.4" cy="12.4" r="3.5"/><circle cx="83.2" cy="11.4" r="3.7"/><circle cx="83.7" cy="10.2" r="3.2"/><circle cx="82.6" cy="9.8" r="3.8"/><circle cx="81.8" cy="9.0" r="3.7"/><circle cx="81.4" cy="5.4" r="2.9"/><circle cx="84.1" cy="6.0" r="3.8"/><circle cx="84.9" cy="8.6" r="2.9"/><circle cx="86.5" cy="8.5" r="3.3"/><circle cx="9.6" cy="85.8" r="3.9"/><circle cx="16.4" cy="85.9" r="3.9"/><circle cx="16.8" cy="88.5" r="3.8"/><circle cx="13.0" cy="89.9" r="3.5"/><circle cx="9.7" cy="86.4" r="4.2"/><circle cx="9.6" cy="85.8" r="3.5"/><circle cx="9.6" cy="85.8" r="4.4"/><circle cx="3.9" cy="88.0" r="3.6"/><circle cx="4.0" cy="85.4" r="3.9"/><circle cx="5.0" cy="84.3" r="3.4"/><circle cx="8.1" cy="83.9" r="3.4"/><circle cx="9.5" cy="83.9" r="3.7"/><circle cx="10.3" cy="82.8" r="4.2"/><circle cx="12.6" cy="81.9" r="3.9"/><circle cx="13.9" cy="83.5" r="3.9"/><circle cx="69.3" cy="65.2" r="3.1"/><circle cx="73.9" cy="65.8" r="3.0"/><circle cx="72.8" cy="66.9" r="2.8"/><circle cx="69.9" cy="66.9" r="3.0"/><circle cx="68.7" cy="68.5" r="3.1"/><circle cx="65.9" cy="70.4" r="3.3"/><circle cx="63.8" cy="67.7" r="2.9"/><circle cx="68.4" cy="64.9" r="3.1"/><circle cx="69.3" cy="65.2" r="3.6"/><circle cx="69.2" cy="64.6" r="3.6"/><circle cx="70.1" cy="63.1" r="3.3"/><circle cx="72.6" cy="63.5" r="3.4"/><circle cx="20.2" cy="25.6" r="2.9"/><circle cx="22.1" cy="25.9" r="3.3"/><circle cx="21.2" cy="26.3" r="2.9"/><circle cx="20.2" cy="25.6" r="3.2"/><circle cx="20.2" cy="25.7" r="2.7"/><circle cx="16.6" cy="29.3" r="2.9"/><circle cx="16.9" cy="26.3" r="3.0"/><circle cx="18.8" cy="25.0" r="2.6"/><circle cx="20.0" cy="25.4" r="3.1"/><circle cx="20.0" cy="19.8" r="2.9"/><circle cx="22.3" cy="20.1" r="3.2"/><circle cx="24.1" cy="23.8" r="3.0"/><circle cx="75.0" cy="33.4" r="3.2"/><circle cx="77.5" cy="33.5" r="3.3"/><circle cx="77.3" cy="34.5" r="3.5"/><circle cx="77.3" cy="36.9" r="2.8"/><circle cx="75.3" cy="37.6" r="3.2"/><circle cx="74.9" cy="33.6" r="3.5"/><circle cx="75.0" cy="33.4" r="3.5"/><circle cx="73.4" cy="33.3" r="3.4"/><circle cx="69.5" cy="29.7" r="3.3"/><circle cx="71.8" cy="27.0" r="3.2"/><circle cx="74.7" cy="28.4" r="3.5"/><circle cx="76.5" cy="30.5" r="3.2"/><circle cx="75.8" cy="32.9" r="3.3"/><circle cx="30.6" cy="7.4" r="4.0"/><circle cx="37.2" cy="8.0" r="4.0"/><circle cx="35.7" cy="9.2" r="3.5"/><circle cx="32.7" cy="9.3" r="4.5"/><circle cx="31.6" cy="11.0" r="4.2"/><circle cx="30.2" cy="9.7" r="4.1"/><circle cx="29.9" cy="8.7" r="4.4"/><circle cx="28.8" cy="9.0" r="4.0"/><circle cx="28.3" cy="7.9" r="4.4"/><circle cx="26.5" cy="6.0" r="4.3"/><circle cx="26.4" cy="5.0" r="4.3"/><circle cx="28.6" cy="4.6" r="4.0"/><circle cx="30.4" cy="6.0" r="4.3"/><circle cx="31.8" cy="3.7" r="3.7"/><circle cx="31.8" cy="109.7" r="3.7"/><circle cx="34.5" cy="4.0" r="4.4"/><circle cx="34.5" cy="110.0" r="4.4"/><circle cx="36.4" cy="4.1" r="3.5"/><circle cx="42.4" cy="89.7" r="3.5"/><circle cx="46.6" cy="89.2" r="3.0"/><circle cx="44.8" cy="91.1" r="3.2"/><circle cx="43.6" cy="91.8" r="3.8"/><circle cx="43.0" cy="93.2" r="3.0"/><circle cx="40.7" cy="96.0" r="3.0"/><circle cx="37.5" cy="93.5" r="3.4"/><circle cx="41.0" cy="90.0" r="3.5"/><circle cx="42.4" cy="89.7" r="3.8"/><circle cx="42.4" cy="89.7" r="3.6"/><circle cx="41.4" cy="85.7" r="3.1"/><circle cx="42.4" cy="84.2" r="3.8"/><circle cx="45.6" cy="84.7" r="2.9"/><circle cx="46.4" cy="88.0" r="3.9"/><circle cx="-2.1" cy="42.1" r="3.0"/><circle cx="103.9" cy="42.1" r="3.0"/><circle cx="0.5" cy="42.4" r="2.9"/><circle cx="106.5" cy="42.4" r="2.9"/><circle cx="-0.2" cy="43.2" r="2.7"/><circle cx="105.8" cy="43.2" r="2.7"/><circle cx="0.0" cy="47.3" r="2.9"/><circle cx="106.0" cy="47.3" r="2.9"/><circle cx="102.4" cy="48.4" r="3.2"/><circle cx="100.9" cy="46.2" r="2.9"/><circle cx="-2.1" cy="42.1" r="3.2"/><circle cx="103.9" cy="42.1" r="3.2"/><circle cx="-2.1" cy="42.1" r="3.1"/><circle cx="103.9" cy="42.1" r="3.1"/><circle cx="102.2" cy="40.2" r="3.4"/><circle cx="-2.6" cy="38.6" r="2.8"/><circle cx="103.4" cy="38.6" r="2.8"/><circle cx="-0.7" cy="40.0" r="2.7"/><circle cx="105.3" cy="40.0" r="2.7"/><circle cx="0.3" cy="40.8" r="2.8"/><circle cx="106.3" cy="40.8" r="2.8"/><circle cx="60.6" cy="13.9" r="3.4"/><circle cx="65.6" cy="14.5" r="3.8"/><circle cx="65.1" cy="16.5" r="2.9"/><circle cx="62.7" cy="18.0" r="3.9"/><circle cx="60.8" cy="16.3" r="3.7"/><circle cx="60.6" cy="14.0" r="3.2"/><circle cx="60.6" cy="13.9" r="3.8"/><circle cx="57.6" cy="14.5" r="3.0"/><circle cx="55.2" cy="12.5" r="2.9"/><circle cx="56.3" cy="11.0" r="3.6"/><circle cx="60.4" cy="12.7" r="3.8"/><circle cx="61.2" cy="11.6" r="3.7"/><circle cx="63.3" cy="11.1" r="3.3"/><circle cx="65.0" cy="11.9" r="3.4"/><circle cx="3.7" cy="1.9" r="4.2"/><circle cx="3.7" cy="107.9" r="4.2"/><circle cx="109.7" cy="1.9" r="4.2"/><circle cx="109.7" cy="107.9" r="4.2"/><circle cx="8.6" cy="1.8" r="4.4"/><circle cx="8.6" cy="107.8" r="4.4"/><circle cx="8.6" cy="4.3" r="3.9"/><circle cx="6.9" cy="5.8" r="3.9"/><circle cx="6.0" cy="6.8" r="3.9"/><circle cx="4.0" cy="7.0" r="4.3"/><circle cx="110.0" cy="7.0" r="4.3"/><circle cx="1.7" cy="5.2" r="4.0"/><circle cx="107.7" cy="5.2" r="4.0"/><circle cx="1.5" cy="4.8" r="4.3"/><circle cx="107.5" cy="4.8" r="4.3"/><circle cx="0.4" cy="3.5" r="4.7"/><circle cx="0.4" cy="109.5" r="4.7"/><circle cx="106.4" cy="3.5" r="4.7"/><circle cx="106.4" cy="109.5" r="4.7"/><circle cx="-1.1" cy="1.6" r="4.3"/><circle cx="-1.1" cy="107.6" r="4.3"/><circle cx="104.9" cy="1.6" r="4.3"/><circle cx="104.9" cy="107.6" r="4.3"/><circle cx="-1.9" cy="-0.4" r="4.6"/><circle cx="-1.9" cy="105.6" r="4.6"/><circle cx="104.1" cy="-0.4" r="4.6"/><circle cx="104.1" cy="105.6" r="4.6"/><circle cx="-0.1" cy="-2.7" r="4.6"/><circle cx="-0.1" cy="103.3" r="4.6"/><circle cx="105.9" cy="-2.7" r="4.6"/><circle cx="105.9" cy="103.3" r="4.6"/><circle cx="1.4" cy="-2.3" r="4.3"/><circle cx="1.4" cy="103.7" r="4.3"/><circle cx="107.4" cy="-2.3" r="4.3"/><circle cx="107.4" cy="103.7" r="4.3"/><circle cx="3.8" cy="1.1" r="4.2"/><circle cx="3.8" cy="107.1" r="4.2"/><circle cx="109.8" cy="1.1" r="4.2"/><circle cx="109.8" cy="107.1" r="4.2"/><circle cx="3.7" cy="1.9" r="4.7"/><circle cx="3.7" cy="107.9" r="4.7"/><circle cx="109.7" cy="1.9" r="4.7"/><circle cx="109.7" cy="107.9" r="4.7"/><circle cx="4.5" cy="1.1" r="4.0"/><circle cx="4.5" cy="107.1" r="4.0"/><circle cx="7.0" cy="0.6" r="3.5"/><circle cx="7.0" cy="106.6" r="3.5"/><circle cx="83.8" cy="91.5" r="3.7"/><circle cx="89.4" cy="92.0" r="3.8"/><circle cx="88.2" cy="93.3" r="3.3"/><circle cx="85.2" cy="93.1" r="3.7"/><circle cx="83.9" cy="92.1" r="3.5"/><circle cx="83.8" cy="91.5" r="4.2"/><circle cx="82.4" cy="93.7" r="3.7"/><circle cx="79.5" cy="93.8" r="3.7"/><circle cx="80.5" cy="91.7" r="4.1"/><circle cx="80.6" cy="90.3" r="3.8"/><circle cx="81.8" cy="88.6" r="3.7"/><circle cx="83.0" cy="87.0" r="3.2"/><circle cx="85.1" cy="86.5" r="3.7"/><circle cx="86.4" cy="88.1" r="3.8"/><circle cx="87.2" cy="89.3" r="3.8"/><circle cx="96.0" cy="70.0" r="3.5"/><circle cx="100.4" cy="69.9" r="3.4"/><circle cx="97.8" cy="70.7" r="4.0"/><circle cx="96.9" cy="71.7" r="3.3"/><circle cx="96.4" cy="72.4" r="3.8"/><circle cx="94.2" cy="74.0" r="3.9"/><circle cx="92.3" cy="73.1" r="3.8"/><circle cx="94.9" cy="70.2" r="3.8"/><circle cx="96.0" cy="70.0" r="3.0"/><circle cx="95.5" cy="69.6" r="3.6"/><circle cx="94.7" cy="66.3" r="3.4"/><circle cx="97.8" cy="63.1" r="3.4"/><circle cx="99.4" cy="64.3" r="3.6"/><circle cx="100.6" cy="67.9" r="3.6"/><circle cx="50.5" cy="33.6" r="3.2"/><circle cx="52.6" cy="33.5" r="3.3"/><circle cx="53.8" cy="35.3" r="3.5"/><circle cx="52.6" cy="36.8" r="3.2"/><circle cx="50.2" cy="35.8" r="3.5"/><circle cx="49.4" cy="35.5" r="2.7"/><circle cx="49.0" cy="34.3" r="3.4"/><circle cx="47.9" cy="33.3" r="3.0"/><circle cx="49.2" cy="33.1" r="3.0"/><circle cx="49.3" cy="31.8" r="3.4"/><circle cx="50.8" cy="28.9" r="3.2"/><circle cx="52.7" cy="29.1" r="3.3"/><circle cx="53.6" cy="32.3" r="3.6"/><circle cx="61.9" cy="96.4" r="2.9"/><circle cx="63.4" cy="96.5" r="3.1"/><circle cx="65.3" cy="99.3" r="3.1"/><circle cx="64.2" cy="102.5" r="3.2"/><circle cx="61.9" cy="102.7" r="3.2"/><circle cx="61.1" cy="97.3" r="3.1"/><circle cx="61.9" cy="96.4" r="3.3"/><circle cx="59.1" cy="95.2" r="2.8"/><circle cx="60.2" cy="93.9" r="3.3"/><circle cx="61.9" cy="94.6" r="3.4"/><circle cx="62.9" cy="94.8" r="2.6"/><circle cx="63.8" cy="95.2" r="2.9"/><circle cx="99.3" cy="22.1" r="3.1"/><circle cx="-1.7" cy="22.1" r="3.3"/><circle cx="104.3" cy="22.1" r="3.3"/><circle cx="100.6" cy="23.2" r="3.0"/><circle cx="99.4" cy="22.2" r="3.5"/><circle cx="99.3" cy="22.1" r="2.8"/><circle cx="98.6" cy="23.3" r="3.2"/><circle cx="93.8" cy="23.1" r="3.3"/><circle cx="94.6" cy="20.0" r="3.3"/><circle cx="95.9" cy="19.1" r="3.0"/><circle cx="98.9" cy="20.3" r="2.9"/><circle cx="100.4" cy="19.7" r="3.4"/><circle cx="102.4" cy="20.7" r="3.3"/><circle cx="85.4" cy="51.1" r="3.7"/><circle cx="86.7" cy="51.0" r="4.1"/><circle cx="89.7" cy="52.7" r="3.6"/><circle cx="87.8" cy="55.3" r="3.3"/><circle cx="86.2" cy="54.8" r="3.2"/><circle cx="84.8" cy="53.4" r="3.8"/><circle cx="83.0" cy="53.5" r="3.3"/><circle cx="81.7" cy="53.5" r="3.7"/><circle cx="78.1" cy="50.8" r="3.6"/><circle cx="80.0" cy="49.3" r="3.9"/><circle cx="83.7" cy="48.6" r="4.2"/><circle cx="84.7" cy="48.4" r="3.9"/><circle cx="85.8" cy="48.6" r="3.3"/><circle cx="86.7" cy="49.0" r="3.3"/><circle cx="86.9" cy="50.0" r="3.5"/><circle cx="28.9" cy="73.0" r="3.4"/><circle cx="33.0" cy="72.6" r="3.3"/><circle cx="31.1" cy="74.3" r="3.6"/><circle cx="29.6" cy="74.5" r="3.2"/><circle cx="28.9" cy="76.9" r="3.2"/><circle cx="25.8" cy="76.9" r="3.0"/><circle cx="26.3" cy="74.2" r="3.2"/><circle cx="27.5" cy="73.2" r="3.0"/><circle cx="28.9" cy="73.0" r="3.6"/><circle cx="27.3" cy="69.7" r="3.2"/><circle cx="29.5" cy="68.2" r="3.4"/><circle cx="31.3" cy="67.8" r="2.9"/><circle cx="33.8" cy="70.9" r="2.9"/><circle cx="68.0" cy="81.3" r="1.6"/><circle cx="70.1" cy="81.1" r="1.6"/><circle cx="68.0" cy="81.3" r="1.8"/><circle cx="67.7" cy="81.6" r="2.0"/><circle cx="64.7" cy="81.0" r="1.8"/><circle cx="67.4" cy="80.4" r="2.0"/><circle cx="69.0" cy="78.7" r="1.8"/><circle cx="34.1" cy="39.7" r="2.3"/><circle cx="35.9" cy="39.6" r="2.2"/><circle cx="36.9" cy="42.2" r="2.5"/><circle cx="33.8" cy="41.7" r="2.2"/><circle cx="34.1" cy="39.7" r="2.4"/><circle cx="33.8" cy="39.7" r="2.3"/><circle cx="31.9" cy="37.1" r="2.7"/><circle cx="33.7" cy="34.6" r="2.2"/><circle cx="35.6" cy="38.6" r="2.3"/><circle cx="7.9" cy="67.9" r="1.6"/><circle cx="8.8" cy="67.9" r="1.8"/><circle cx="9.6" cy="70.1" r="1.8"/><circle cx="6.5" cy="70.2" r="1.8"/><circle cx="7.0" cy="67.9" r="1.6"/><circle cx="7.4" cy="66.9" r="1.8"/><circle cx="8.6" cy="66.8" r="1.6"/><circle cx="64.1" cy="45.9" r="1.6"/><circle cx="64.1" cy="45.9" r="1.6"/><circle cx="64.3" cy="46.4" r="1.9"/><circle cx="63.0" cy="47.4" r="1.8"/><circle cx="62.4" cy="46.1" r="1.8"/><circle cx="63.1" cy="44.4" r="1.8"/><circle cx="65.9" cy="43.2" r="1.9"/><circle cx="26.5" cy="94.7" r="1.5"/><circle cx="29.6" cy="94.4" r="1.9"/><circle cx="27.3" cy="96.1" r="1.5"/><circle cx="26.5" cy="94.7" r="1.9"/><circle cx="23.6" cy="94.6" r="1.9"/><circle cx="26.1" cy="94.2" r="1.6"/><circle cx="27.3" cy="93.5" r="1.9"/><circle cx="47.8" cy="3.6" r="1.5"/><circle cx="49.2" cy="3.5" r="1.7"/><circle cx="49.0" cy="5.6" r="1.7"/><circle cx="47.8" cy="3.6" r="1.7"/><circle cx="45.8" cy="3.6" r="1.6"/><circle cx="46.4" cy="1.4" r="1.7"/><circle cx="46.4" cy="107.4" r="1.7"/><circle cx="48.5" cy="2.1" r="1.7"/><circle cx="40.2" cy="21.3" r="0.7"/><circle cx="40.2" cy="21.3" r="0.8"/><circle cx="40.2" cy="21.3" r="0.9"/><circle cx="39.0" cy="22.9" r="0.9"/><circle cx="39.2" cy="21.2" r="0.9"/><circle cx="39.9" cy="20.9" r="0.9"/><circle cx="41.0" cy="20.1" r="0.9"/><circle cx="53.6" cy="75.3" r="0.7"/><circle cx="55.0" cy="75.3" r="0.9"/><circle cx="54.0" cy="76.0" r="0.9"/><circle cx="53.1" cy="76.0" r="1.0"/><circle cx="53.6" cy="75.3" r="1.0"/><circle cx="53.6" cy="75.3" r="1.0"/><circle cx="54.5" cy="73.6" r="0.9"/><circle cx="74.1" cy="104.2" r="0.7"/><circle cx="74.2" cy="104.2" r="0.9"/><circle cx="74.1" cy="104.2" r="0.9"/><circle cx="73.7" cy="104.6" r="0.9"/><circle cx="73.5" cy="104.2" r="0.9"/><circle cx="73.2" cy="102.9" r="1.0"/><circle cx="75.0" cy="103.0" r="0.8"/><circle cx="90.2" cy="35.9" r="0.7"/><circle cx="91.6" cy="36.1" r="0.9"/><circle cx="91.4" cy="37.9" r="1.0"/><circle cx="90.1" cy="36.3" r="1.0"/><circle cx="90.2" cy="35.9" r="1.0"/><circle cx="89.9" cy="35.2" r="0.9"/><circle cx="90.3" cy="35.9" r="1.0"/><circle cx="2.6" cy="58.4" r="0.6"/><circle cx="3.4" cy="58.3" r="0.8"/><circle cx="3.1" cy="59.1" r="0.8"/><circle cx="2.1" cy="59.4" r="0.8"/><circle cx="2.6" cy="58.4" r="0.7"/><circle cx="2.6" cy="58.4" r="0.8"/><circle cx="3.0" cy="57.4" r="0.9"/><circle cx="101.0" cy="92.3" r="0.6"/><circle cx="101.0" cy="92.3" r="0.9"/><circle cx="101.1" cy="92.6" r="0.8"/><circle cx="100.9" cy="92.3" r="0.9"/><circle cx="100.1" cy="92.3" r="0.9"/><circle cx="100.4" cy="91.2" r="0.8"/><circle cx="101.6" cy="90.7" r="0.8"/><circle cx="12.7" cy="39.2" r="0.8"/><circle cx="13.3" cy="39.2" r="1.1"/><circle cx="12.8" cy="39.5" r="1.0"/><circle cx="12.2" cy="40.0" r="1.0"/><circle cx="12.7" cy="39.2" r="1.2"/><circle cx="11.9" cy="38.2" r="1.0"/><circle cx="14.1" cy="37.2" r="1.0"/><circle cx="7.2" cy="18.4" r="0.6"/><circle cx="8.6" cy="18.5" r="0.9"/><circle cx="7.2" cy="18.4" r="0.8"/><circle cx="7.2" cy="18.4" r="0.9"/><circle cx="5.9" cy="18.4" r="0.8"/><circle cx="7.0" cy="18.2" r="0.9"/><circle cx="7.8" cy="17.4" r="0.8"/></g><g fill="#fff"><circle cx="49.0" cy="58.5" r="2.9"/><circle cx="52.8" cy="58.5" r="2.8"/><circle cx="51.8" cy="59.4" r="2.9"/><circle cx="51.3" cy="60.7" r="2.3"/><circle cx="49.6" cy="61.0" r="2.4"/><circle cx="48.5" cy="61.5" r="2.2"/><circle cx="46.0" cy="63.6" r="2.7"/><circle cx="41.4" cy="64.6" r="1.8"/><circle cx="40.7" cy="62.7" r="2.7"/><circle cx="41.2" cy="59.0" r="2.3"/><circle cx="46.1" cy="57.0" r="2.4"/><circle cx="48.3" cy="58.0" r="2.9"/><circle cx="49.0" cy="58.5" r="2.6"/><circle cx="48.8" cy="56.0" r="2.3"/><circle cx="51.2" cy="53.5" r="2.1"/><circle cx="52.4" cy="55.1" r="2.3"/><circle cx="52.6" cy="56.4" r="2.9"/><circle cx="20.6" cy="53.5" r="2.5"/><circle cx="24.5" cy="53.0" r="2.3"/><circle cx="25.0" cy="55.4" r="2.1"/><circle cx="23.3" cy="56.2" r="1.7"/><circle cx="20.8" cy="55.0" r="2.5"/><circle cx="20.3" cy="54.3" r="2.5"/><circle cx="19.6" cy="54.8" r="2.4"/><circle cx="17.4" cy="55.0" r="2.4"/><circle cx="17.2" cy="53.4" r="2.4"/><circle cx="16.1" cy="50.9" r="1.7"/><circle cx="16.6" cy="49.2" r="2.3"/><circle cx="18.9" cy="47.9" r="2.0"/><circle cx="21.0" cy="48.5" r="2.3"/><circle cx="22.7" cy="50.8" r="2.1"/><circle cx="22.9" cy="52.5" r="2.3"/><circle cx="85.1" cy="9.2" r="2.0"/><circle cx="90.5" cy="9.7" r="1.4"/><circle cx="90.5" cy="12.7" r="1.5"/><circle cx="87.5" cy="13.2" r="2.0"/><circle cx="85.4" cy="11.6" r="1.9"/><circle cx="84.2" cy="10.6" r="2.1"/><circle cx="84.7" cy="9.4" r="1.8"/><circle cx="83.6" cy="9.0" r="2.2"/><circle cx="82.8" cy="8.2" r="2.0"/><circle cx="82.4" cy="4.6" r="1.4"/><circle cx="85.1" cy="5.2" r="2.1"/><circle cx="85.9" cy="7.8" r="1.4"/><circle cx="87.5" cy="7.7" r="1.5"/><circle cx="10.6" cy="85.0" r="2.6"/><circle cx="17.4" cy="85.1" r="2.2"/><circle cx="17.8" cy="87.7" r="2.2"/><circle cx="14.0" cy="89.1" r="1.8"/><circle cx="10.7" cy="85.6" r="2.7"/><circle cx="10.6" cy="85.0" r="2.0"/><circle cx="10.6" cy="85.0" r="3.0"/><circle cx="4.9" cy="87.2" r="2.0"/><circle cx="5.0" cy="84.6" r="2.5"/><circle cx="6.0" cy="83.5" r="1.8"/><circle cx="9.1" cy="83.1" r="1.7"/><circle cx="10.5" cy="83.1" r="2.0"/><circle cx="11.3" cy="82.0" r="2.8"/><circle cx="13.6" cy="81.1" r="2.1"/><circle cx="14.9" cy="82.7" r="2.3"/><circle cx="70.3" cy="64.4" r="1.8"/><circle cx="74.9" cy="65.0" r="1.4"/><circle cx="73.8" cy="66.1" r="1.4"/><circle cx="70.9" cy="66.1" r="1.3"/><circle cx="69.7" cy="67.7" r="1.4"/><circle cx="66.9" cy="69.6" r="1.6"/><circle cx="64.8" cy="66.9" r="1.5"/><circle cx="69.4" cy="64.1" r="1.7"/><circle cx="70.3" cy="64.4" r="1.8"/><circle cx="70.2" cy="63.8" r="2.1"/><circle cx="71.1" cy="62.3" r="1.7"/><circle cx="73.6" cy="62.7" r="2.0"/><circle cx="21.2" cy="24.8" r="1.6"/><circle cx="23.1" cy="25.1" r="1.7"/><circle cx="22.2" cy="25.5" r="1.4"/><circle cx="21.2" cy="24.8" r="1.5"/><circle cx="21.2" cy="24.9" r="1.1"/><circle cx="17.6" cy="28.5" r="1.3"/><circle cx="17.9" cy="25.5" r="1.6"/><circle cx="19.8" cy="24.2" r="1.0"/><circle cx="21.0" cy="24.6" r="1.4"/><circle cx="21.0" cy="19.0" r="1.4"/><circle cx="23.3" cy="19.3" r="1.7"/><circle cx="25.1" cy="23.0" r="1.4"/><circle cx="76.0" cy="32.6" r="1.9"/><circle cx="78.5" cy="32.7" r="1.8"/><circle cx="78.3" cy="33.7" r="1.9"/><circle cx="78.3" cy="36.1" r="1.2"/><circle cx="76.3" cy="36.8" r="1.4"/><circle cx="75.9" cy="32.8" r="1.9"/><circle cx="76.0" cy="32.6" r="2.1"/><circle cx="74.4" cy="32.5" r="1.9"/><circle cx="70.5" cy="28.9" r="1.8"/><circle cx="72.8" cy="26.2" r="1.6"/><circle cx="75.7" cy="27.6" r="2.0"/><circle cx="77.5" cy="29.7" r="1.5"/><circle cx="76.8" cy="32.1" r="1.8"/><circle cx="31.6" cy="6.6" r="2.7"/><circle cx="38.2" cy="7.2" r="2.4"/><circle cx="36.7" cy="8.4" r="1.8"/><circle cx="33.7" cy="8.5" r="2.7"/><circle cx="32.6" cy="10.2" r="2.6"/><circle cx="31.2" cy="8.9" r="2.5"/><circle cx="30.9" cy="7.9" r="2.8"/><circle cx="29.8" cy="8.2" r="2.6"/><circle cx="29.3" cy="7.1" r="2.8"/><circle cx="27.5" cy="5.2" r="2.6"/><circle cx="27.4" cy="4.2" r="2.8"/><circle cx="29.6" cy="3.8" r="2.3"/><circle cx="31.4" cy="5.2" r="2.8"/><circle cx="32.8" cy="2.9" r="1.9"/><circle cx="35.5" cy="3.2" r="2.7"/><circle cx="37.4" cy="3.3" r="1.8"/><circle cx="43.4" cy="88.9" r="2.1"/><circle cx="47.6" cy="88.4" r="1.4"/><circle cx="45.8" cy="90.3" r="1.8"/><circle cx="44.6" cy="91.0" r="2.0"/><circle cx="44.0" cy="92.4" r="1.6"/><circle cx="41.7" cy="95.2" r="1.3"/><circle cx="38.5" cy="92.7" r="2.1"/><circle cx="42.0" cy="89.2" r="2.1"/><circle cx="43.4" cy="88.9" r="2.2"/><circle cx="43.4" cy="88.9" r="2.0"/><circle cx="42.4" cy="84.9" r="1.4"/><circle cx="43.4" cy="83.4" r="2.2"/><circle cx="46.6" cy="83.9" r="1.5"/><circle cx="47.4" cy="87.2" r="2.1"/><circle cx="-1.1" cy="41.3" r="1.6"/><circle cx="104.9" cy="41.3" r="1.6"/><circle cx="1.5" cy="41.6" r="1.4"/><circle cx="0.8" cy="42.4" r="1.0"/><circle cx="106.8" cy="42.4" r="1.0"/><circle cx="1.0" cy="46.5" r="1.4"/><circle cx="107.0" cy="46.5" r="1.4"/><circle cx="103.4" cy="47.6" r="1.4"/><circle cx="101.9" cy="45.4" r="1.3"/><circle cx="-1.1" cy="41.3" r="1.6"/><circle cx="104.9" cy="41.3" r="1.6"/><circle cx="-1.1" cy="41.3" r="1.4"/><circle cx="104.9" cy="41.3" r="1.4"/><circle cx="103.2" cy="39.4" r="1.7"/><circle cx="104.4" cy="37.8" r="1.2"/><circle cx="0.3" cy="39.2" r="0.9"/><circle cx="106.3" cy="39.2" r="0.9"/><circle cx="1.3" cy="40.0" r="1.1"/><circle cx="61.6" cy="13.1" r="2.1"/><circle cx="66.6" cy="13.7" r="2.0"/><circle cx="66.1" cy="15.7" r="1.4"/><circle cx="63.7" cy="17.2" r="2.1"/><circle cx="61.8" cy="15.5" r="2.3"/><circle cx="61.6" cy="13.2" r="1.4"/><circle cx="61.6" cy="13.1" r="2.2"/><circle cx="58.6" cy="13.7" r="1.6"/><circle cx="56.2" cy="11.7" r="1.4"/><circle cx="57.3" cy="10.2" r="1.8"/><circle cx="61.4" cy="11.9" r="2.3"/><circle cx="62.2" cy="10.8" r="2.2"/><circle cx="64.3" cy="10.3" r="1.9"/><circle cx="66.0" cy="11.1" r="1.6"/><circle cx="4.7" cy="1.1" r="2.9"/><circle cx="4.7" cy="107.1" r="2.9"/><circle cx="9.6" cy="1.0" r="2.9"/><circle cx="9.6" cy="107.0" r="2.9"/><circle cx="9.6" cy="3.5" r="2.3"/><circle cx="7.9" cy="5.0" r="2.1"/><circle cx="7.0" cy="6.0" r="2.1"/><circle cx="5.0" cy="6.2" r="2.7"/><circle cx="2.7" cy="4.4" r="2.5"/><circle cx="2.5" cy="4.0" r="2.7"/><circle cx="108.5" cy="4.0" r="2.7"/><circle cx="1.4" cy="2.7" r="3.2"/><circle cx="1.4" cy="108.7" r="3.2"/><circle cx="107.4" cy="2.7" r="3.2"/><circle cx="107.4" cy="108.7" r="3.2"/><circle cx="-0.1" cy="0.8" r="2.7"/><circle cx="-0.1" cy="106.8" r="2.7"/><circle cx="105.9" cy="0.8" r="2.7"/><circle cx="105.9" cy="106.8" r="2.7"/><circle cx="-0.9" cy="-1.2" r="3.1"/><circle cx="-0.9" cy="104.8" r="3.1"/><circle cx="105.1" cy="-1.2" r="3.1"/><circle cx="105.1" cy="104.8" r="3.1"/><circle cx="0.9" cy="102.5" r="3.0"/><circle cx="106.9" cy="102.5" r="3.0"/><circle cx="2.4" cy="102.9" r="2.7"/><circle cx="108.4" cy="102.9" r="2.7"/><circle cx="4.8" cy="0.3" r="2.5"/><circle cx="4.8" cy="106.3" r="2.5"/><circle cx="4.7" cy="1.1" r="3.3"/><circle cx="4.7" cy="107.1" r="3.3"/><circle cx="5.5" cy="0.3" r="2.2"/><circle cx="5.5" cy="106.3" r="2.2"/><circle cx="8.0" cy="-0.2" r="2.1"/><circle cx="8.0" cy="105.8" r="2.1"/><circle cx="84.8" cy="90.7" r="2.4"/><circle cx="90.4" cy="91.2" r="2.1"/><circle cx="89.2" cy="92.5" r="1.7"/><circle cx="86.2" cy="92.3" r="2.0"/><circle cx="84.9" cy="91.3" r="1.7"/><circle cx="84.8" cy="90.7" r="2.4"/><circle cx="83.4" cy="92.9" r="2.1"/><circle cx="80.5" cy="93.0" r="1.9"/><circle cx="81.5" cy="90.9" r="2.6"/><circle cx="81.6" cy="89.5" r="2.2"/><circle cx="82.8" cy="87.8" r="2.2"/><circle cx="84.0" cy="86.2" r="1.6"/><circle cx="86.1" cy="85.7" r="2.2"/><circle cx="87.4" cy="87.3" r="2.3"/><circle cx="88.2" cy="88.5" r="2.1"/><circle cx="97.0" cy="69.2" r="2.2"/><circle cx="101.4" cy="69.1" r="1.7"/><circle cx="98.8" cy="69.9" r="2.3"/><circle cx="97.9" cy="70.9" r="1.8"/><circle cx="97.4" cy="71.6" r="2.2"/><circle cx="95.2" cy="73.2" r="2.4"/><circle cx="93.3" cy="72.3" r="2.2"/><circle cx="95.9" cy="69.4" r="2.4"/><circle cx="97.0" cy="69.2" r="1.6"/><circle cx="96.5" cy="68.8" r="2.0"/><circle cx="95.7" cy="65.5" r="2.0"/><circle cx="98.8" cy="62.3" r="1.8"/><circle cx="100.4" cy="63.5" r="1.9"/><circle cx="101.6" cy="67.1" r="2.0"/><circle cx="51.5" cy="32.8" r="1.8"/><circle cx="53.6" cy="32.7" r="1.8"/><circle cx="54.8" cy="34.5" r="2.1"/><circle cx="53.6" cy="36.0" r="1.5"/><circle cx="51.2" cy="35.0" r="1.7"/><circle cx="50.4" cy="34.7" r="1.1"/><circle cx="50.0" cy="33.5" r="1.8"/><circle cx="48.9" cy="32.5" r="1.4"/><circle cx="50.2" cy="32.3" r="1.6"/><circle cx="50.3" cy="31.0" r="1.8"/><circle cx="51.8" cy="28.1" r="1.6"/><circle cx="53.7" cy="28.3" r="1.9"/><circle cx="54.6" cy="31.5" r="2.2"/><circle cx="62.9" cy="95.6" r="1.6"/><circle cx="64.4" cy="95.7" r="1.5"/><circle cx="66.3" cy="98.5" r="1.6"/><circle cx="65.2" cy="101.7" r="1.5"/><circle cx="62.9" cy="101.9" r="1.6"/><circle cx="62.1" cy="96.5" r="1.4"/><circle cx="62.9" cy="95.6" r="1.8"/><circle cx="60.1" cy="94.4" r="1.3"/><circle cx="61.2" cy="93.1" r="1.7"/><circle cx="62.9" cy="93.8" r="1.7"/><circle cx="63.9" cy="94.0" r="1.0"/><circle cx="64.8" cy="94.4" r="1.3"/><circle cx="100.3" cy="21.3" r="1.7"/><circle cx="-0.7" cy="21.3" r="1.9"/><circle cx="105.3" cy="21.3" r="1.9"/><circle cx="101.6" cy="22.4" r="1.3"/><circle cx="100.4" cy="21.4" r="2.0"/><circle cx="100.3" cy="21.3" r="1.1"/><circle cx="99.6" cy="22.5" r="1.6"/><circle cx="94.8" cy="22.3" r="1.9"/><circle cx="95.6" cy="19.2" r="1.7"/><circle cx="96.9" cy="18.3" r="1.5"/><circle cx="99.9" cy="19.5" r="1.3"/><circle cx="101.4" cy="18.9" r="1.7"/><circle cx="103.4" cy="19.9" r="1.5"/><circle cx="86.4" cy="50.3" r="2.4"/><circle cx="87.7" cy="50.2" r="2.3"/><circle cx="90.7" cy="51.9" r="2.0"/><circle cx="88.8" cy="54.5" r="1.5"/><circle cx="87.2" cy="54.0" r="1.4"/><circle cx="85.8" cy="52.6" r="2.0"/><circle cx="84.0" cy="52.7" r="1.7"/><circle cx="82.7" cy="52.7" r="2.3"/><circle cx="79.1" cy="50.0" r="1.8"/><circle cx="81.0" cy="48.5" r="2.2"/><circle cx="84.7" cy="47.8" r="2.4"/><circle cx="85.7" cy="47.6" r="2.5"/><circle cx="86.8" cy="47.8" r="1.5"/><circle cx="87.7" cy="48.2" r="1.6"/><circle cx="87.9" cy="49.2" r="2.0"/><circle cx="29.9" cy="72.2" r="2.0"/><circle cx="34.0" cy="71.8" r="1.8"/><circle cx="32.1" cy="73.5" r="2.1"/><circle cx="30.6" cy="73.7" r="1.8"/><circle cx="29.9" cy="76.1" r="1.7"/><circle cx="26.8" cy="76.1" r="1.4"/><circle cx="27.3" cy="73.4" r="1.7"/><circle cx="28.5" cy="72.4" r="1.2"/><circle cx="29.9" cy="72.2" r="2.0"/><circle cx="28.3" cy="68.9" r="1.7"/><circle cx="30.5" cy="67.4" r="1.8"/><circle cx="32.3" cy="67.0" r="1.1"/><circle cx="34.8" cy="70.1" r="1.3"/><circle cx="69.0" cy="80.5" r="0.3"/><circle cx="71.1" cy="80.3" r="0.3"/><circle cx="69.0" cy="80.5" r="0.3"/><circle cx="68.7" cy="80.8" r="0.4"/><circle cx="65.7" cy="80.2" r="0.3"/><circle cx="68.4" cy="79.6" r="0.5"/><circle cx="70.0" cy="77.9" r="0.3"/><circle cx="35.1" cy="38.9" r="0.9"/><circle cx="36.9" cy="38.8" r="0.8"/><circle cx="37.9" cy="41.4" r="0.9"/><circle cx="34.8" cy="40.9" r="0.7"/><circle cx="35.1" cy="38.9" r="0.7"/><circle cx="34.8" cy="38.9" r="0.6"/><circle cx="32.9" cy="36.3" r="1.2"/><circle cx="34.7" cy="33.8" r="0.7"/><circle cx="36.6" cy="37.8" r="0.7"/><circle cx="8.9" cy="67.1" r="0.3"/><circle cx="9.8" cy="67.1" r="0.3"/><circle cx="10.6" cy="69.3" r="0.3"/><circle cx="7.5" cy="69.4" r="0.3"/><circle cx="8.0" cy="67.1" r="0.3"/><circle cx="8.4" cy="66.1" r="0.3"/><circle cx="9.6" cy="66.0" r="0.3"/><circle cx="65.1" cy="45.1" r="0.3"/><circle cx="65.1" cy="45.1" r="0.3"/><circle cx="65.3" cy="45.6" r="0.3"/><circle cx="64.0" cy="46.6" r="0.3"/><circle cx="63.4" cy="45.3" r="0.3"/><circle cx="64.1" cy="43.6" r="0.3"/><circle cx="66.9" cy="42.4" r="0.4"/><circle cx="27.5" cy="93.9" r="0.3"/><circle cx="30.6" cy="93.6" r="0.5"/><circle cx="28.3" cy="95.3" r="0.3"/><circle cx="27.5" cy="93.9" r="0.3"/><circle cx="24.6" cy="93.8" r="0.3"/><circle cx="27.1" cy="93.4" r="0.3"/><circle cx="28.3" cy="92.7" r="0.3"/><circle cx="48.8" cy="2.8" r="0.3"/><circle cx="50.2" cy="2.7" r="0.3"/><circle cx="50.0" cy="4.8" r="0.3"/><circle cx="48.8" cy="2.8" r="0.3"/><circle cx="46.8" cy="2.8" r="0.3"/><circle cx="47.4" cy="0.6" r="0.3"/><circle cx="49.5" cy="1.3" r="0.3"/><circle cx="40.6" cy="21.0" r="0.3"/><circle cx="40.6" cy="21.0" r="0.3"/><circle cx="40.6" cy="21.0" r="0.3"/><circle cx="39.4" cy="22.6" r="0.3"/><circle cx="39.6" cy="20.9" r="0.3"/><circle cx="40.3" cy="20.6" r="0.3"/><circle cx="41.4" cy="19.8" r="0.3"/><circle cx="54.0" cy="75.0" r="0.3"/><circle cx="55.4" cy="75.0" r="0.3"/><circle cx="54.4" cy="75.7" r="0.3"/><circle cx="53.5" cy="75.7" r="0.3"/><circle cx="54.0" cy="75.0" r="0.3"/><circle cx="54.0" cy="75.0" r="0.3"/><circle cx="54.9" cy="73.3" r="0.3"/><circle cx="74.5" cy="103.9" r="0.3"/><circle cx="74.6" cy="103.9" r="0.3"/><circle cx="74.5" cy="103.9" r="0.3"/><circle cx="74.1" cy="104.3" r="0.3"/><circle cx="73.9" cy="103.9" r="0.3"/><circle cx="73.6" cy="102.6" r="0.3"/><circle cx="75.4" cy="102.7" r="0.3"/><circle cx="90.6" cy="35.6" r="0.3"/><circle cx="92.0" cy="35.8" r="0.3"/><circle cx="91.8" cy="37.6" r="0.3"/><circle cx="90.5" cy="36.0" r="0.3"/><circle cx="90.6" cy="35.6" r="0.3"/><circle cx="90.3" cy="34.9" r="0.3"/><circle cx="90.7" cy="35.6" r="0.3"/><circle cx="3.0" cy="58.1" r="0.3"/><circle cx="3.8" cy="58.0" r="0.3"/><circle cx="3.5" cy="58.8" r="0.3"/><circle cx="2.5" cy="59.1" r="0.3"/><circle cx="3.0" cy="58.1" r="0.3"/><circle cx="3.0" cy="58.1" r="0.3"/><circle cx="3.4" cy="57.1" r="0.3"/><circle cx="101.4" cy="92.0" r="0.3"/><circle cx="101.4" cy="92.0" r="0.3"/><circle cx="101.5" cy="92.3" r="0.3"/><circle cx="101.3" cy="92.0" r="0.3"/><circle cx="100.5" cy="92.0" r="0.3"/><circle cx="100.8" cy="90.9" r="0.3"/><circle cx="102.0" cy="90.4" r="0.3"/><circle cx="13.1" cy="38.9" r="0.3"/><circle cx="13.7" cy="38.9" r="0.3"/><circle cx="13.2" cy="39.2" r="0.3"/><circle cx="12.6" cy="39.7" r="0.3"/><circle cx="13.1" cy="38.9" r="0.4"/><circle cx="12.3" cy="37.9" r="0.3"/><circle cx="14.5" cy="36.9" r="0.3"/><circle cx="7.6" cy="18.1" r="0.3"/><circle cx="9.0" cy="18.2" r="0.3"/><circle cx="7.6" cy="18.1" r="0.3"/><circle cx="7.6" cy="18.1" r="0.3"/><circle cx="6.3" cy="18.1" r="0.3"/><circle cx="7.4" cy="17.9" r="0.3"/><circle cx="8.2" cy="17.1" r="0.3"/></g><g fill="#2243b0"><circle cx="49.6" cy="57.5" r="1.2"/><circle cx="46.7" cy="56.2" r="0.5"/><circle cx="19.7" cy="54.3" r="0.9"/><circle cx="22.9" cy="53.4" r="0.8"/><circle cx="84.0" cy="9.1" r="1.1"/><circle cx="11.8" cy="86.1" r="0.8"/><circle cx="8.5" cy="84.5" r="0.7"/><circle cx="70.2" cy="65.5" r="1.0"/><circle cx="68.4" cy="64.8" r="0.7"/><circle cx="21.4" cy="24.4" r="1.1"/><circle cx="23.5" cy="23.9" r="0.7"/><circle cx="75.9" cy="33.1" r="0.8"/><circle cx="30.8" cy="5.7" r="1.1"/><circle cx="29.3" cy="5.2" r="0.6"/><circle cx="44.6" cy="89.7" r="0.9"/><circle cx="41.8" cy="90.9" r="0.6"/><circle cx="104.4" cy="40.2" r="0.8"/><circle cx="61.5" cy="12.5" r="1.0"/><circle cx="5.6" cy="1.5" r="0.9"/><circle cx="85.2" cy="90.2" r="1.1"/><circle cx="98.0" cy="68.3" r="1.1"/><circle cx="95.0" cy="67.4" r="0.7"/><circle cx="50.8" cy="33.0" r="0.9"/><circle cx="53.0" cy="30.8" r="0.6"/><circle cx="64.0" cy="95.7" r="1.2"/><circle cx="100.6" cy="22.1" r="1.1"/><circle cx="102.3" cy="23.2" r="0.7"/><circle cx="85.2" cy="49.8" r="0.8"/><circle cx="29.8" cy="71.9" r="1.0"/><circle cx="31.6" cy="72.3" r="0.5"/><circle cx="69.3" cy="80.7" r="1.1"/><circle cx="68.3" cy="79.3" r="0.8"/><circle cx="34.9" cy="39.1" r="0.9"/><circle cx="10.0" cy="67.7" r="0.9"/><circle cx="65.9" cy="44.9" r="0.8"/><circle cx="64.4" cy="45.4" r="0.8"/><circle cx="26.5" cy="92.7" r="1.2"/><circle cx="48.2" cy="3.9" r="0.9"/><circle cx="47.4" cy="1.2" r="0.7"/></g></pattern></defs><rect width="337" height="337" fill="url(#lp)"/></svg>
<div class="t" style="left:607px;top:446px;width:0;height:0;color:#050a20"><div class="t" style="left:0;top:0;transform:translate(-50%,-50%) rotate(90deg);font-family:'Liberation Serif',serif;font-size:12.5px">Tucker</div></div>
<div class="t" style="left:606.5px;top:584px;width:0;height:0;color:#050a20"><div class="t" style="left:0;top:0;transform:translate(-50%,-50%) rotate(90deg);font-family:'Liberation Serif',serif;font-style:italic;font-size:7.4px;letter-spacing:-.1px">Enjoy Tucker with family and friends, around over a meal and break bread.</div></div>
<div class="t" style="left:990px;top:563px;width:0;height:0;color:#050a20"><div class="t" style="left:0;top:0;transform:translate(-50%,-50%) rotate(-90deg);font-family:'Liberation Serif',serif;font-style:italic;font-size:7.2px;letter-spacing:-.05px">Please care for this 100% cotton napkin by machine washing in cold water, tumble dry low.</div></div>
<div class="t" style="left:799.5px;top:754px;width:0;height:0;color:#050a20"><div class="t" style="left:0;top:0;transform:translate(-50%,-50%);font-family:'Liberation Serif',serif;font-style:italic;font-size:7.25px;letter-spacing:-.05px">This napkin was made by GIVE with love and a living wage in the Dominican Republic.</div></div>
<div class="a" style="left:593px;top:357px;width:413px;height:413px;border:1px solid #3d8ff0"></div>
<svg style="left:0;top:0" width="1901" height="1075"><g fill="#f2f2f2" stroke="#3d8ff0" stroke-width="1"><rect x="589.5" y="353.5" width="8" height="8"/><rect x="795.5" y="353.5" width="8" height="8"/><rect x="1001.5" y="353.5" width="8" height="8"/><rect x="589.5" y="559.5" width="8" height="8"/><rect x="1001.5" y="559.5" width="8" height="8"/><rect x="589.5" y="765.5" width="8" height="8"/><rect x="795.5" y="765.5" width="8" height="8"/><rect x="1001.5" y="765.5" width="8" height="8"/></g></svg>


<!-- SCROLLBARS / STATUS -->
<div class="a" style="left:1523px;top:111px;width:16px;height:905px;background:#424242"></div>
<div class="a" style="left:1526px;top:384px;width:10px;height:360px;border-radius:5px;background:#5e5e5e"></div>
<div class="a" style="left:76px;top:1016px;width:1463px;height:17px;background:#424242"></div>
<div class="a" style="left:136px;top:1016px;width:183px;height:17px;background:#4a4a4a"></div>
<div class="a" style="left:1523px;top:1016px;width:16px;height:17px;background:#474747"></div>
<div class="a" style="left:642px;top:1019px;width:558px;height:10px;border-radius:5px;background:#5e5e5e"></div>
<div class="t" style="left:84px;top:1020px;font-size:12.6px;color:#e8e8e8;letter-spacing:.15px">33.33%</div>
<div class="t" style="left:156.5px;top:1019px;font-size:10.8px;color:#cfcfcf">1238 px x 1936 px (72 ppi)</div>
<svg style="left:309px;top:1019px" width="6" height="11" viewBox="0 0 6 11"><path d="M1 .5 L4.5 5.5 L1 10.5" fill="none" stroke="#cfcfcf" stroke-width="1.1"/></svg>

<!-- RIGHT DOCK -->
<div class="a" style="left:1539px;top:83px;width:3px;height:950px;background:#333"></div>
<div class="a" style="left:1540px;top:83px;width:1px;height:950px;background:#484848"></div>
<div class="a" style="left:1542px;top:83px;width:325px;height:11px;background:#3c3c3c"></div>
<div class="a" style="left:1542px;top:94px;width:38px;height:939px;background:#4a4a4a"></div>
<div class="a" style="left:1542px;top:163px;width:38px;height:1px;background:#383838"></div>
<div class="a" style="left:1580px;top:94px;width:2px;height:939px;background:#383838"></div>
<div class="a" style="left:1582px;top:94px;width:285px;height:939px;background:#4a4a4a"></div>
<svg style="left:0;top:0" width="1901" height="1075"><path d="M1570.4 86.600l-2.400 2.200 2.400 2.200M1574.400 86.600l-2.400 2.200 2.400 2.200M1853.600 86.600l2.400 2.200-2.400 2.200M1857.600 86.600l2.400 2.200-2.400 2.200" fill="none" stroke="#c8c8c8" stroke-width="1.100"/><g stroke="#393939" stroke-width="1"><path d="M1551.5 98v4"/><path d="M1553.5 98v4"/><path d="M1555.5 98v4"/><path d="M1557.5 98v4"/><path d="M1559.5 98v4"/><path d="M1561.5 98v4"/><path d="M1563.5 98v4"/><path d="M1565.5 98v4"/><path d="M1567.5 98v4"/><path d="M1569.5 98v4"/></g><g fill="none" stroke="#dadada" stroke-width="1"><rect x="1554" y="109.500" width="4.200" height="4.200"/><rect x="1554" y="115.600" width="4.200" height="4.200"/></g><rect x="1553.500" y="121.300" width="5.200" height="5" fill="#dadada"/><path d="M1561 111.300l6.400-1-1.900 2.100c2.800 4 1.800 9.300-2.600 12.300 3-3.600 3.200-7.600 .9-10.600l-1.900 2z" fill="#dadada"/><path d="M1555.500 139.400h11.600a1.200 1.200 0 0 1 1.200 1.200v6.200a1.200 1.200 0 0 1-1.200 1.200h-6.300l-3.600 3.400v-3.400h-1.700a1.200 1.200 0 0 1-1.200-1.200v-6.200a1.200 1.200 0 0 1 1.200-1.200z" fill="#dadada"/></svg><div class="a" style="left:1582px;top:94px;width:285px;height:29px;background:#3d3d3d"></div><div class="a" style="left:1582px;top:94px;width:46px;height:30px;background:#4a4a4a"></div><div class="t b" style="letter-spacing:-0.087px;left:1591px;top:103.4px;font-size:10.900px;color:#f0f0f0">Color</div><div class="t b" style="letter-spacing:-0.318px;left:1636.7px;top:103.4px;font-size:10.900px;color:#b4b4b4">Swatches</div><div class="t b" style="letter-spacing:-0.149px;left:1704px;top:103.4px;font-size:10.900px;color:#b4b4b4">Gradients</div><div class="t b" style="letter-spacing:-0.137px;left:1773px;top:103.4px;font-size:10.900px;color:#b4b4b4">Patterns</div><div class="psep" style="left:1628px;top:94px;height:29px"></div><div class="psep" style="left:1694px;top:94px;height:29px"></div><div class="psep" style="left:1763px;top:94px;height:29px"></div><div class="psep" style="left:1825px;top:94px;height:29px"></div><svg style="left:1851px;top:104.5px" width="10" height="8" viewBox="0 0 10 8"><path d="M0 .5h10M0 2.800h10M0 5.100h10M0 7.400h10" stroke="#c4c4c4" stroke-width="1"/></svg><div class="a" style="left:1582px;top:123px;width:285px;height:0px"></div><div class="a" style="left:1601.500px;top:143.500px;width:19px;height:19px;background:#fff;border:.5px solid #333"></div><div class="a" style="left:1591px;top:133px;width:19.700px;height:19.700px;background:#1efc05;border:1px solid #2a2a2a;outline:1px solid #8a8a8a;outline-offset:0"></div><svg style="left:1590px;top:179px" width="13" height="12" viewBox="0 0 13 12"><path d="M6.500 .5l6 11H.5z" fill="#dadada"/><rect x="5.800" y="4" width="1.500" height="4" fill="#444"/><rect x="5.800" y="8.800" width="1.500" height="1.500" fill="#444"/></svg><div class="a" style="left:1605.500px;top:179.500px;width:13px;height:13px;background:#5cb53c;border:1px solid #f0f0f0"></div><div class="a" style="left:1627px;top:130px;width:187px;height:258px;background:linear-gradient(to top,#000,rgba(0,0,0,0)),linear-gradient(to right,#fff,#22ff00)"></div><svg style="left:1806px;top:124px" width="14" height="14" viewBox="0 0 14 14"><clipPath id="cfc"><rect x="0" y="6" width="8" height="8"/></clipPath><circle cx="7.500" cy="6.500" r="4.500" fill="none" stroke="#1a3a10" stroke-width="1.200" clip-path="url(#cfc)"/></svg><div class="a" style="left:1831px;top:130px;width:19px;height:258px;background:linear-gradient(to bottom,#ff0000 0%,#ff00ff 16.670%,#0000ff 33.330%,#00ffff 50%,#00ff00 66.670%,#ffff00 83.330%,#ff0000 100%)"></div><svg style="left:1820px;top:300.500px" width="9" height="10" viewBox="0 0 9 10"><path d="M1 1h3.600l3.400 4-3.400 4H1z" fill="#e6e6e6" stroke="#2a2a2a" stroke-width=".9"/></svg><div class="a" style="left:1582px;top:405px;width:285px;height:3px;background:#383838"></div><div class="a" style="left:1582px;top:719px;width:285px;height:3px;background:#383838"></div><div class="a" style="left:1582px;top:408px;width:285px;height:28px;background:#3d3d3d"></div><div class="a" style="left:1582px;top:408px;width:71px;height:29px;background:#4a4a4a"></div><div class="t b" style="letter-spacing:-0.158px;left:1591px;top:416.9px;font-size:10.900px;color:#f0f0f0">Properties</div><div class="t b" style="letter-spacing:-0.116px;left:1662.3px;top:416.9px;font-size:10.900px;color:#b4b4b4">Adjustments</div><div class="t b" style="letter-spacing:-0.113px;left:1746px;top:416.9px;font-size:10.900px;color:#b4b4b4">Libraries</div><div class="psep" style="left:1653px;top:408px;height:28px"></div><div class="psep" style="left:1736.5px;top:408px;height:28px"></div><div class="psep" style="left:1800.5px;top:408px;height:28px"></div><svg style="left:1851px;top:419px" width="10" height="8" viewBox="0 0 10 8"><path d="M0 .5h10M0 2.800h10M0 5.100h10M0 7.400h10" stroke="#c4c4c4" stroke-width="1"/></svg><div class="a" style="left:1593px;top:443px;width:22px;height:22px;background:#323232;border:1px solid #5c5c5c;border-radius:2px"></div><svg style="left:1597.500px;top:447px" width="13" height="14" viewBox="0 0 13 14"><path d="M4.500 .8h4.600l3 3v9.400H7.800V7H4.500z" fill="#dadada"/><path d="M9.100 .8v3h3" fill="none" stroke="#323232" stroke-width=".9"/><rect x=".8" y="7.600" width="6" height="5.600" fill="#9a9a9a"/></svg><div class="t" style="letter-spacing:-0.150px;left:1620.200px;top:449px;font-size:11px;color:#d8d8d8">Embedded Smart Object</div><div class="a" style="left:1582px;top:470px;width:285px;height:1px;background:#383838"></div><div class="a" style="left:1851px;top:471px;width:16px;height:224px;background:#444"></div><div class="a" style="left:1854px;top:474px;width:10px;height:118.500px;border-radius:5px;background:#5e5e5e"></div><div class="t b" style="letter-spacing:-0.144px;left:1590.200px;top:485px;font-size:11px;color:#e6e6e6">Transform</div><svg style="left:0;top:0" width="1901" height="1075"><path d="M1762.8999999999999 491.0A4.400 4.400 0 1 1 1767.3 495.4" fill="none" stroke="#dadada" stroke-width="1.400"/><path d="M1759.5 489.6l6 -.6l-3.400 5z" fill="#dadada"/><path d="M1760 496.400h12" stroke="#dadada" stroke-width="1.100"/></svg><div class="t"  style="left:1590.2px;top:512px;font-size:11px;color:#d8d8d8">W:</div><div class="t" style="letter-spacing:-0.222px;left:1607.3px;top:512px;font-size:11px;color:#d8d8d8">1238 px</div><div class="t"  style="left:1701.2px;top:512px;font-size:11px;color:#d8d8d8">H:</div><div class="t" style="letter-spacing:-0.165px;left:1716.6px;top:512px;font-size:11px;color:#d8d8d8">1238 px</div><div class="t" style="left:1591px;top:534px;font-size:11px;color:#d8d8d8">X:</div><div class="t" style="left:1702.400px;top:534px;font-size:11px;color:#d8d8d8">Y:</div><div class="inp" style="left:1605.500px;top:531.500px;width:61px;height:15.500px"></div><div class="inp" style="left:1715.500px;top:531.500px;width:61px;height:15.500px"></div><div class="t" style="left:1609.500px;top:534px;font-size:11px;color:#f0f0f0">0 px</div><div class="t" style="left:1719.200px;top:534px;font-size:11px;color:#f0f0f0">349 px</div><svg style="left:0;top:0" width="1901" height="1075"><path d="M1588.600 567.600h12.300l-2.900-8z" fill="none" stroke="#dadada" stroke-width="1.100" stroke-linejoin="miter"/></svg><div class="inp" style="left:1606px;top:555.500px;width:59.500px;height:17px"></div><div class="a" style="left:1650.500px;top:556.500px;width:1px;height:15px;background:#646464"></div><div class="t" style="left:1610px;top:559px;font-size:11px;color:#f0f0f0">0.00°</div><svg style="left:1654.500px;top:562.500px" width="7" height="5" viewBox="0 0 7 5"><path d="M.5 .6l3 3 3-3" fill="none" stroke="#dadada" stroke-width="1.100"/></svg><div class="a" style="left:1586.500px;top:582px;width:261px;height:1.500px;background:#3e3e3e"></div><div class="t" style="letter-spacing:0.015px;left:1590.200px;top:593px;font-size:11px;color:#d8d8d8">Oxford Cotton Animal Print.tif</div><div class="a" style="left:1590.200px;top:612.500px;width:252.500px;height:18px;border:1px solid #5a5a5a;border-radius:2px;background:#4a4a4a"></div><div class="t" style="letter-spacing:-0.086px;left:1598px;top:616px;font-size:11px;color:#7c7c7c">Don't Apply Layer Comp</div><svg style="left:1831.500px;top:619.500px" width="7" height="5" viewBox="0 0 7 5"><path d="M.5 .6l3 3 3-3" fill="none" stroke="#6e6e6e" stroke-width="1.100"/></svg><div class="a" style="left:1586.500px;top:639.500px;width:261px;height:1.500px;background:#3e3e3e"></div><div class="a" style="left:1639.500px;top:649.500px;width:115.500px;height:23.500px;background:#3a3a3a;border:1px solid #5c5c5c;border-radius:3px"></div><div class="t" style="letter-spacing:-0.096px;left:1664.500px;top:655.500px;font-size:11px;color:#eaeaea">Edit Contents</div><div class="a" style="left:1582px;top:722px;width:285px;height:28px;background:#3d3d3d"></div><div class="a" style="left:1582px;top:722px;width:52px;height:29px;background:#4a4a4a"></div><div class="t b" style="letter-spacing:-0.404px;left:1591px;top:730.9px;font-size:10.900px;color:#f0f0f0">Layers</div><div class="t b" style="letter-spacing:-0.316px;left:1643.3px;top:730.9px;font-size:10.900px;color:#b4b4b4">Channels</div><div class="t b" style="letter-spacing:-0.416px;left:1709px;top:730.9px;font-size:10.900px;color:#b4b4b4">Paths</div><div class="psep" style="left:1633.5px;top:722px;height:28px"></div><div class="psep" style="left:1699.5px;top:722px;height:28px"></div><div class="psep" style="left:1746.5px;top:722px;height:28px"></div><svg style="left:1851px;top:733px" width="10" height="8" viewBox="0 0 10 8"><path d="M0 .5h10M0 2.800h10M0 5.100h10M0 7.400h10" stroke="#c4c4c4" stroke-width="1"/></svg><div class="inp" style="left:1585.500px;top:760px;width:88px;height:17.500px;background:#3e3e3e;border-color:#383838"></div><svg style="left:1593px;top:763px" width="11" height="12" viewBox="0 0 11 12"><circle cx="4.300" cy="4.500" r="3.300" fill="none" stroke="#dadada" stroke-width="1.400"/><path d="M6.700 7l3.200 3.600" stroke="#dadada" stroke-width="1.800"/></svg><div class="t" style="letter-spacing:-0.383px;left:1607px;top:763.500px;font-size:11px;color:#e6e6e6">Kind</div><svg style="left:1662.500px;top:766.500px" width="7" height="5" viewBox="0 0 7 5"><path d="M.5 .6l3 3 3-3" fill="none" stroke="#dadada" stroke-width="1.100"/></svg><svg style="left:0;top:0" width="1901" height="1075"><rect x="1685.500" y="764" width="11" height="9.400" rx="1" fill="none" stroke="#dadada" stroke-width="1.100"/><path d="M1687 771.800l2.400-3 1.700 1.900 1.500-1.300 2.400 2.400z" fill="#dadada"/><circle cx="1693.500" cy="766.600" r=".9" fill="#dadada"/><circle cx="1715" cy="768.800" r="5" fill="none" stroke="#dadada" stroke-width="1.100"/><path d="M1718.540 765.260a5 5 0 0 1-7.080 7.080z" fill="#dadada"/><path d="M1734.800 764h9.800v2.900h-1l-.4-1.600h-2.500v7.700l1.500 .3v.9h-5v-.9l1.500-.3v-7.700h-2.500l-.4 1.600h-1z" fill="#dadada"/><rect x="1759.500" y="765" width="8" height="8" fill="none" stroke="#dadada" stroke-width="1.100"/><g fill="#dadada"><rect x="1757.800" y="763.300" width="3" height="3"/><rect x="1766.200" y="763.300" width="3" height="3"/><rect x="1757.800" y="771.700" width="3" height="3"/><rect x="1766.200" y="771.700" width="3" height="3"/></g><path d="M1785.800 763.500h4.400l2.800 2.800v8.200h-4v-4.500h-3.200z" fill="none" stroke="#dadada" stroke-width="1.100"/><rect x="1783.400" y="770" width="4.600" height="4.500" fill="#dadada"/><rect x="1805.700" y="760.300" width="8.600" height="17" rx="4.300" fill="#3a3a3a" stroke="#5a5a5a" stroke-width=".8"/><circle cx="1810" cy="764.600" r="3.900" fill="#e8e8e8"/></svg><div class="a" style="left:1582px;top:782.500px;width:285px;height:1px;background:#3c3c3c"></div><div class="inp" style="left:1585.500px;top:788px;width:130px;height:17.300px;background:#3e3e3e;border-color:#383838"></div><div class="t" style="letter-spacing:-0.209px;left:1593.300px;top:792px;font-size:11px;color:#e6e6e6">Normal</div><svg style="left:1705.200px;top:795px" width="7" height="5" viewBox="0 0 7 5"><path d="M.5 .6l3 3 3-3" fill="none" stroke="#dadada" stroke-width="1.100"/></svg><div class="t" style="letter-spacing:-0.107px;left:1719.200px;top:791.500px;font-size:11px;color:#d8d8d8">Opacity:</div><div class="inp" style="left:1762.300px;top:787.6px;width:51.200px;height:17.200px;background:#3a3a3a;border-color:#5e5e5e"></div><div class="a" style="left:1798.600px;top:788.6px;width:1px;height:15.200px;background:#5e5e5e"></div><div class="t" style="letter-spacing:-0.485px;left:1765.700px;top:792.2px;font-size:11px;color:#f0f0f0">100%</div><svg style="left:1802.500px;top:795.0px" width="7" height="5" viewBox="0 0 7 5"><path d="M.5 .6l3 3 3-3" fill="none" stroke="#dadada" stroke-width="1.100"/></svg><div class="inp" style="left:1762.300px;top:815.8px;width:51.200px;height:17.200px;background:#3a3a3a;border-color:#5e5e5e"></div><div class="a" style="left:1798.600px;top:816.8px;width:1px;height:15.200px;background:#5e5e5e"></div><div class="t" style="letter-spacing:-0.485px;left:1765.700px;top:819.7px;font-size:11px;color:#f0f0f0">100%</div><svg style="left:1802.500px;top:822.5px" width="7" height="5" viewBox="0 0 7 5"><path d="M.5 .6l3 3 3-3" fill="none" stroke="#dadada" stroke-width="1.100"/></svg><div class="a" style="left:1582px;top:810.500px;width:285px;height:1px;background:#3c3c3c"></div><div class="t" style="letter-spacing:-0.199px;left:1587px;top:819.500px;font-size:11px;color:#d8d8d8">Lock:</div><div class="t" style="letter-spacing:-0.262px;left:1742.900px;top:819.500px;font-size:11px;color:#d8d8d8">Fill:</div><svg style="left:0;top:0" width="1901" height="1075"><rect x="1619.500" y="819.500" width="10.400" height="10.400" fill="#5a5a5a" stroke="#8a8a8a" stroke-width=".8"/><g fill="#a8a8a8"><rect x="1620" y="820" width="3.200" height="3.200"/><rect x="1626.400" y="820" width="3.200" height="3.200"/><rect x="1623.200" y="823.200" width="3.200" height="3.200"/><rect x="1620" y="826.400" width="3.200" height="3.200"/><rect x="1626.400" y="826.400" width="3.200" height="3.200"/></g><g transform="translate(1646.800 825.400) scale(1.220) translate(-1646.800 -824.600)"><path d="M1652.600 818.800c.5 .4 .3 1-.2 1.600l-4.600 6.200-1.600-1.300 5-6c.4-.5 1-.9 1.400-.5zM1645.500 826l1.600 1.300c.2 1.800-1.500 3-3.500 3-1.100 0-1.800-.2-2.500-.7 1.500-.2 1.900-1.100 2.300-2.100.4-1 1-1.600 2.100-1.500z" fill="#8a8a8a"/></g><g fill="#dadada"><path d="M1667.800 819.600h1v10.600h-1zM1663 824.400h10.600v1H1663z"/><path d="M1668.300 818l2.300 2.700h-4.600zM1668.300 831.800l-2.300-2.700h4.600zM1661.400 824.900l2.700-2.300v4.600zM1675.200 824.900l-2.700 2.300v-4.600z"/></g><g fill="none" stroke="#dadada" stroke-width="1.100"><path d="M1684.500 822.300h8.700v7.700M1686.600 820v10h8.400" /><path d="M1684.500 822.300h1M1693.200 830h0" /></g><path d="M1687.800 819.500h6.500M1696.300 823v5.500" stroke="#dadada" stroke-width="1" stroke-dasharray="1.200 1.200" fill="none"/><rect x="1708.400" y="824" width="9" height="7" rx="1" fill="#dadada"/><path d="M1710.300 824v-2.200a2.600 2.600 0 0 1 5.200 0v2.200" fill="none" stroke="#dadada" stroke-width="1.300"/></svg><div class="a" style="left:1582px;top:840px;width:269px;height:166px;background:#3c3c3c"></div><div class="a" style="left:1851px;top:840px;width:16px;height:166px;background:#454545"></div><div class="row" style="top:841px;background:#646464"></div><div class="a" style="left:1582px;top:841px;width:29.500px;height:40px;background:#4c4c4c"></div><div class="eyecol" style="top:841px;height:40px"></div><svg style="left:1590.600px;top:857.8px" width="14" height="9.300" viewBox="0 0 15 10"><path d="M.6 5C2.400 2 4.800 .7 7.500 .7S12.600 2 14.400 5C12.600 8 10.200 9.300 7.500 9.300S2.400 8 .6 5z" fill="#dadada"/><circle cx="7.500" cy="5" r="3" fill="#4c4c4c"/><circle cx="7.500" cy="5" r="1.700" fill="#dadada"/></svg><div class="t" style="letter-spacing:-0.047px;left:1646.100px;top:856px;font-size:11px;color:#ececec">Oxford Cotton Animal Print</div><div class="row" style="top:882px;background:#4c4c4c"></div><div class="a" style="left:1582px;top:882px;width:29.500px;height:40px;background:#4c4c4c"></div><div class="eyecol" style="top:882px;height:40px"></div><svg style="left:1590.600px;top:898.8px" width="14" height="9.300" viewBox="0 0 15 10"><path d="M.6 5C2.400 2 4.800 .7 7.500 .7S12.600 2 14.400 5C12.600 8 10.200 9.300 7.500 9.300S2.400 8 .6 5z" fill="#dadada"/><circle cx="7.500" cy="5" r="3" fill="#4c4c4c"/><circle cx="7.500" cy="5" r="1.700" fill="#dadada"/></svg><div class="t" style="letter-spacing:0.066px;left:1646.100px;top:897px;font-size:11px;color:#ececec">stripe</div><div class="row" style="top:923px;background:#4c4c4c"></div><div class="a" style="left:1582px;top:923px;width:29.500px;height:40px;background:#4c4c4c"></div><div class="eyecol" style="top:923px;height:40px"></div><svg style="left:1590.600px;top:939.8px" width="14" height="9.300" viewBox="0 0 15 10"><path d="M.6 5C2.400 2 4.800 .7 7.500 .7S12.600 2 14.400 5C12.600 8 10.200 9.300 7.500 9.300S2.400 8 .6 5z" fill="#dadada"/><circle cx="7.500" cy="5" r="3" fill="#4c4c4c"/><circle cx="7.500" cy="5" r="1.700" fill="#dadada"/></svg><div class="t" style="letter-spacing:-0.107px;left:1646.100px;top:938px;font-size:11px;color:#ececec">Linen Tucker Handw...in Climbing Birds</div><div class="row" style="top:964px;background:#4c4c4c"></div><div class="a" style="left:1582px;top:964px;width:29.500px;height:40px;background:#4c4c4c"></div><div class="eyecol" style="top:964px;height:40px"></div><svg style="left:1590.600px;top:980.8px" width="14" height="9.300" viewBox="0 0 15 10"><path d="M.6 5C2.400 2 4.800 .7 7.500 .7S12.600 2 14.400 5C12.600 8 10.200 9.300 7.500 9.300S2.400 8 .6 5z" fill="#dadada"/><circle cx="7.500" cy="5" r="3" fill="#4c4c4c"/><circle cx="7.500" cy="5" r="1.700" fill="#dadada"/></svg><div class="t" style="letter-spacing:-0.215px;left:1646.100px;top:979px;font-size:11px;color:#ececec">Layer 0</div><svg style="left:0;top:0" width="1901" height="1075"><rect x="1613.700" y="842.700" width="27.500" height="37.700" fill="#fff"/><rect x="1615.700" y="845.200" width="22.800" height="32.600" fill="#222"/><rect x="1616.700" y="846.700" width="20.600" height="30.100" fill="#fff"/><rect x="1616.70" y="846.7" width="4.120" height="4.400" fill="#fff"/><rect x="1620.82" y="846.7" width="4.120" height="4.400" fill="#d2d2d2"/><rect x="1624.94" y="846.7" width="4.120" height="4.400" fill="#fff"/><rect x="1629.06" y="846.7" width="4.120" height="4.400" fill="#d2d2d2"/><rect x="1633.18" y="846.7" width="4.120" height="4.400" fill="#fff"/><rect x="1616.70" y="872.4" width="4.120" height="4.400" fill="#fff"/><rect x="1620.82" y="872.4" width="4.120" height="4.400" fill="#d2d2d2"/><rect x="1624.94" y="872.4" width="4.120" height="4.400" fill="#fff"/><rect x="1629.06" y="872.4" width="4.120" height="4.400" fill="#d2d2d2"/><rect x="1633.18" y="872.4" width="4.120" height="4.400" fill="#fff"/><rect x="1616.700" y="851.100" width="20.600" height="21.300" fill="#1f40a5"/><rect x="1619" y="853.200" width="16" height="16.800" fill="#fff"/><g fill="#000"><rect x="1622.4" y="861.4" width="1.6" height="1.8"/><rect x="1627.9" y="854.2" width="1.2" height="2.0"/><rect x="1622.7" y="856.7" width="2.4" height="1.7"/><rect x="1630.9" y="860.3" width="2.0" height="1.4"/><rect x="1628.0" y="866.2" width="1.8" height="1.9"/><rect x="1628.5" y="854.2" width="2.1" height="1.8"/><rect x="1623.3" y="853.7" width="2.2" height="1.7"/><rect x="1629.2" y="866.4" width="2.1" height="2.1"/><rect x="1624.6" y="865.2" width="1.7" height="2.1"/><rect x="1631.5" y="854.7" width="1.4" height="1.4"/><rect x="1632.7" y="859.7" width="2.0" height="1.5"/><rect x="1626.2" y="859.0" width="1.6" height="1.8"/><rect x="1627.3" y="866.8" width="2.0" height="2.1"/><rect x="1631.2" y="868.1" width="2.0" height="1.4"/><rect x="1631.2" y="867.7" width="2.3" height="1.8"/><rect x="1629.1" y="856.4" width="2.2" height="1.8"/><rect x="1623.0" y="854.2" width="2.2" height="2.2"/><rect x="1620.3" y="865.2" width="1.7" height="1.4"/><rect x="1623.2" y="864.7" width="2.2" height="1.2"/><rect x="1627.7" y="853.9" width="2.1" height="1.5"/><rect x="1631.5" y="867.9" width="1.8" height="2.2"/><rect x="1623.4" y="854.4" width="1.9" height="1.2"/><rect x="1621.8" y="859.3" width="1.9" height="1.4"/><rect x="1619.6" y="866.2" width="1.6" height="2.2"/><rect x="1631.7" y="858.9" width="1.8" height="1.7"/><rect x="1628.1" y="862.1" width="1.9" height="1.8"/><rect x="1632.4" y="860.8" width="1.7" height="1.9"/><rect x="1622.4" y="857.7" width="2.4" height="1.7"/><rect x="1626.8" y="853.4" width="1.7" height="1.8"/><rect x="1619.3" y="862.4" width="2.0" height="1.3"/><rect x="1627.9" y="860.2" width="2.0" height="1.6"/><rect x="1629.0" y="864.3" width="1.2" height="1.3"/><rect x="1628.6" y="867.6" width="1.5" height="1.7"/><rect x="1627.4" y="858.0" width="1.6" height="1.5"/><rect x="1624.2" y="862.1" width="1.6" height="1.6"/><rect x="1630.0" y="853.6" width="1.9" height="1.9"/><rect x="1623.4" y="856.5" width="2.2" height="1.4"/><rect x="1621.7" y="859.7" width="2.0" height="1.3"/><rect x="1623.6" y="858.2" width="2.2" height="1.6"/><rect x="1631.1" y="855.7" width="1.6" height="1.9"/><rect x="1631.6" y="860.0" width="1.5" height="1.3"/><rect x="1626.5" y="856.1" width="2.2" height="2.0"/><rect x="1621.6" y="857.4" width="2.2" height="1.8"/><rect x="1630.4" y="858.4" width="1.4" height="1.5"/><rect x="1630.3" y="857.3" width="1.6" height="1.6"/><rect x="1625.0" y="859.3" width="2.3" height="1.4"/></g><rect x="1623" y="864.1" width="14.300" height="12.700" fill="#4b4b4b"/><path d="M1629.2 866.1h3.600l2.500 2.500v6.700h-3.400v-4.400h-2.700z" fill="#dcdcdc"/><path d="M1632.8 866.1v2.500h2.500" fill="none" stroke="#4b4b4b" stroke-width=".8"/><rect x="1625.4" y="871.5" width="4.600" height="4.200" fill="#c8c8c8"/><rect x="1616" y="886.300" width="22.500" height="32.700" fill="#2a2a2a"/><rect x="1617" y="887.500" width="20.400" height="30.400" fill="#d7bb98"/><rect x="1617" y="890.4" width="20.400" height="3" fill="#efe5d3"/><rect x="1617" y="896.5" width="20.400" height="3" fill="#efe5d3"/><rect x="1617" y="902.6" width="20.400" height="3" fill="#efe5d3"/><rect x="1617" y="908.7" width="20.400" height="3" fill="#efe5d3"/><rect x="1617" y="914.8" width="20.400" height="3" fill="#efe5d3"/><rect x="1623.2" y="905.2" width="14.300" height="12.700" fill="#4b4b4b"/><path d="M1629.4 907.2h3.600l2.500 2.500v6.700h-3.400v-4.400h-2.700z" fill="#dcdcdc"/><path d="M1633.0 907.2v2.500h2.500" fill="none" stroke="#4b4b4b" stroke-width=".8"/><rect x="1625.6000000000001" y="912.6" width="4.600" height="4.200" fill="#c8c8c8"/><rect x="1616" y="927.300" width="22.500" height="32.700" fill="#2a2a2a"/><rect x="1617" y="928.500" width="20.400" height="30.400" fill="#0a2240"/><rect x="1617" y="928.500" width="20.400" height="1.300" fill="#0f4a66"/><rect x="1617" y="957" width="6" height="1.900" fill="#0f5a78"/><g fill="#e0383e"><rect x="1618" y="931" width="3" height="2" rx=".8"/><rect x="1620.5" y="932.5" width="4" height="2.2" rx=".8"/><rect x="1624" y="931.5" width="3" height="1.5" rx=".8"/><rect x="1619" y="935" width="2.5" height="2" rx=".8"/><rect x="1622" y="939" width="3" height="2.5" rx=".8"/><rect x="1624.5" y="941.5" width="3.5" height="2" rx=".8"/><rect x="1621" y="942" width="2" height="1.5" rx=".8"/><rect x="1620.5" y="955" width="2" height="1.8" rx=".8"/><rect x="1636" y="930.5" width="1" height="1" rx=".8"/></g><g fill="#f4b8b8"><rect x="1621.500" y="933" width="1.500" height="1.200"/><rect x="1623" y="940" width="1.500" height="1.200"/></g><rect x="1623.2" y="946.2" width="14.300" height="12.700" fill="#4b4b4b"/><path d="M1629.4 948.2h3.600l2.500 2.500v6.700h-3.400v-4.400h-2.700z" fill="#dcdcdc"/><path d="M1633.0 948.2v2.500h2.500" fill="none" stroke="#4b4b4b" stroke-width=".8"/><rect x="1625.6000000000001" y="953.6" width="4.600" height="4.200" fill="#c8c8c8"/><rect x="1616" y="968.300" width="22.500" height="32.700" fill="#2a2a2a"/><rect x="1617" y="969.500" width="20.400" height="30.400" fill="#fdfdff"/><g fill="none" stroke="#7d78b8" stroke-width=".7" stroke-dasharray="1.200 .7"><circle cx="1622" cy="977" r="1.900"/><circle cx="1631" cy="977.5" r="1.900"/><circle cx="1622.5" cy="986" r="1.900"/><circle cx="1631" cy="986" r="1.900"/><circle cx="1622" cy="994.5" r="1.900"/><circle cx="1631" cy="994.5" r="1.900"/></g><g fill="#a8a4d4"><rect x="1617.6" y="997.4" width=".8" height=".8"/><rect x="1634.2" y="998.6" width=".8" height=".8"/><rect x="1625.8" y="997.6" width=".8" height=".8"/><rect x="1635.1" y="976.4" width=".8" height=".8"/><rect x="1631.7" y="994.3" width=".8" height=".8"/><rect x="1630.1" y="985.1" width=".8" height=".8"/><rect x="1623.0" y="979.9" width=".8" height=".8"/><rect x="1621.8" y="972.0" width=".8" height=".8"/><rect x="1628.7" y="978.3" width=".8" height=".8"/><rect x="1632.9" y="971.3" width=".8" height=".8"/><rect x="1634.7" y="990.1" width=".8" height=".8"/><rect x="1635.1" y="996.0" width=".8" height=".8"/><rect x="1634.6" y="986.7" width=".8" height=".8"/><rect x="1617.7" y="991.6" width=".8" height=".8"/><rect x="1620.8" y="978.7" width=".8" height=".8"/><rect x="1630.1" y="985.2" width=".8" height=".8"/><rect x="1625.4" y="997.2" width=".8" height=".8"/><rect x="1629.1" y="979.9" width=".8" height=".8"/><rect x="1622.3" y="995.0" width=".8" height=".8"/><rect x="1626.6" y="992.7" width=".8" height=".8"/><rect x="1624.2" y="975.7" width=".8" height=".8"/><rect x="1627.7" y="993.7" width=".8" height=".8"/><rect x="1620.8" y="993.0" width=".8" height=".8"/><rect x="1635.0" y="993.4" width=".8" height=".8"/><rect x="1633.1" y="970.2" width=".8" height=".8"/><rect x="1629.4" y="995.0" width=".8" height=".8"/></g></svg><div class="a" style="left:1582px;top:1005.500px;width:285px;height:1px;background:#3a3a3a"></div><div class="a" style="left:1582px;top:1006.500px;width:285px;height:27px;background:#4a4a4a"></div><svg style="left:0;top:0" width="1901" height="1075"><g fill="none" stroke="#8e8e8e" stroke-width="1.300"><path d="M1669.600 1016.600h-2.400a2.800 2.800 0 0 0 0 5.600h2.400M1672.200 1016.600h2.400a2.800 2.800 0 0 1 0 5.600h-2.400M1667.800 1019.400h6.200"/></g><rect x="1718.600" y="1014" width="12" height="9.400" rx="1" fill="#dadada"/><circle cx="1724.600" cy="1018.700" r="2.900" fill="#4a4a4a"/><circle cx="1751.600" cy="1019" r="4.900" fill="none" stroke="#dadada" stroke-width="1.100"/><path d="M1755.070 1015.530a4.900 4.900 0 0 1-6.940 6.940z" fill="#dadada"/><path d="M1755.800 1024.600h3.200l-1.600 1.800z" fill="#dadada"/><path d="M1773 1014.600h4l1.200 1.300h6.200v7.900H1773z" fill="#dadada"/><rect x="1801" y="1013.800" width="10" height="10.600" rx="1" fill="none" stroke="#dadada" stroke-width="1.100"/><path d="M1806 1016.400v5.400M1803.300 1019.100h5.400" stroke="#dadada" stroke-width="1.100"/><path d="M1828.400 1016.800h8.400l-.7 8.200h-7z" fill="none" stroke="#dadada" stroke-width="1.100"/><path d="M1827.400 1015.400h10.400M1830.800 1015.200v-1.400h3.600v1.400M1831 1018.400v5M1832.600 1018.400v5M1834.200 1018.400v5" stroke="#dadada" stroke-width="1" fill="none"/><path d="M1702.400 1024.800h3l-1.500 1.700z" fill="#dadada"/></svg><div class="t" style="left:1692.500px;top:1011px;font-size:14.500px;font-style:italic;font-family:'Liberation Serif',serif;color:#dadada;letter-spacing:-.5px">fx</div>

<div class="a" style="left:34px;top:26px;width:1833px;height:1007px;border:1px solid rgba(0,0,0,.42);border-radius:6px 6px 0 0"></div>
</div></div>
</body>
</html>
